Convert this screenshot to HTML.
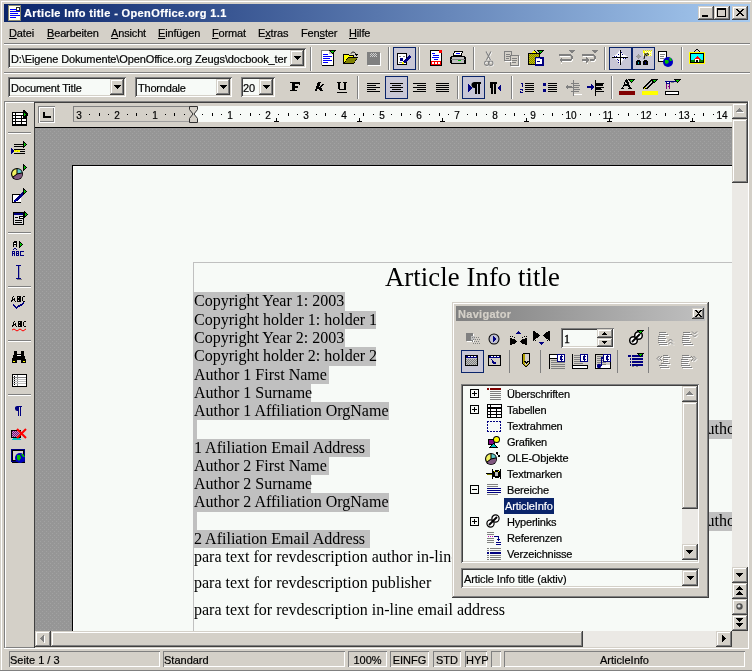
<!DOCTYPE html>
<html><head><meta charset="utf-8"><style>
html,body{margin:0;padding:0;width:752px;height:671px;overflow:hidden;background:#d4d0c8}
body>div{will-change:transform;-webkit-text-stroke:0.2px currentColor}
body>div,body>svg{position:absolute}
body>div>div{position:absolute}
u{text-decoration:underline;text-underline-offset:1px}
</style></head><body>
<div style="left:0px;top:0px;width:752px;height:671px;background:#d4d0c8;"></div>
<div style="left:1px;top:1px;width:750px;height:1px;background:#ffffff;"></div>
<div style="left:1px;top:1px;width:1px;height:669px;background:#ffffff;"></div>
<div style="left:0px;top:670px;width:752px;height:1px;background:#808080;"></div>
<div style="left:4px;top:4px;width:746px;height:18px;background:linear-gradient(90deg,#0a246a,#a6caf0);"></div>
<div style="left:24px;top:8px;font-family:'Liberation Sans',sans-serif;font-size:11px;color:#fff;font-weight:bold;white-space:nowrap;line-height:1;letter-spacing:0.37px">Article Info title - OpenOffice.org 1.1</div>
<div style="left:698px;top:6px;width:16px;height:14px;background:#d4d0c8;box-shadow:inset -1px -1px #404040,inset 1px 1px #d4d0c8,inset -2px -2px #808080,inset 2px 2px #ffffff;"></div>
<div style="left:714px;top:6px;width:16px;height:14px;background:#d4d0c8;box-shadow:inset -1px -1px #404040,inset 1px 1px #d4d0c8,inset -2px -2px #808080,inset 2px 2px #ffffff;"></div>
<div style="left:732px;top:6px;width:16px;height:14px;background:#d4d0c8;box-shadow:inset -1px -1px #404040,inset 1px 1px #d4d0c8,inset -2px -2px #808080,inset 2px 2px #ffffff;"></div>
<div style="left:702px;top:15px;width:6px;height:2px;background:#000;"></div>
<div style="left:717px;top:8px;width:9px;height:9px;box-sizing:border-box;border:1px solid #000;border-top-width:2px"></div>
<svg style="position:absolute;left:735px;top:8px;" width="10" height="10" viewBox="0 0 10 10" shape-rendering="crispEdges"><path d="M1 1L8 8M2 1L9 8M8 1L1 8M9 1L2 8" stroke="#000" stroke-width="1" shape-rendering="crispEdges"/></svg>
<div style="left:9px;top:28px;font-family:'Liberation Sans',sans-serif;font-size:11px;color:#000;font-weight:normal;white-space:nowrap;line-height:1;letter-spacing:-0.15px"><u>D</u>atei</div>
<div style="left:47px;top:28px;font-family:'Liberation Sans',sans-serif;font-size:11px;color:#000;font-weight:normal;white-space:nowrap;line-height:1;letter-spacing:-0.15px"><u>B</u>earbeiten</div>
<div style="left:111px;top:28px;font-family:'Liberation Sans',sans-serif;font-size:11px;color:#000;font-weight:normal;white-space:nowrap;line-height:1;letter-spacing:-0.15px"><u>A</u>nsicht</div>
<div style="left:158px;top:28px;font-family:'Liberation Sans',sans-serif;font-size:11px;color:#000;font-weight:normal;white-space:nowrap;line-height:1;letter-spacing:-0.15px"><u>E</u>infügen</div>
<div style="left:212px;top:28px;font-family:'Liberation Sans',sans-serif;font-size:11px;color:#000;font-weight:normal;white-space:nowrap;line-height:1;letter-spacing:-0.15px"><u>F</u>ormat</div>
<div style="left:258px;top:28px;font-family:'Liberation Sans',sans-serif;font-size:11px;color:#000;font-weight:normal;white-space:nowrap;line-height:1;letter-spacing:-0.15px">E<u>x</u>tras</div>
<div style="left:301px;top:28px;font-family:'Liberation Sans',sans-serif;font-size:11px;color:#000;font-weight:normal;white-space:nowrap;line-height:1;letter-spacing:-0.15px">Fen<u>s</u>ter</div>
<div style="left:349px;top:28px;font-family:'Liberation Sans',sans-serif;font-size:11px;color:#000;font-weight:normal;white-space:nowrap;line-height:1;letter-spacing:-0.15px"><u>H</u>ilfe</div>
<div style="left:4px;top:43px;width:746px;height:1px;background:#808080;"></div>
<div style="left:4px;top:44px;width:746px;height:1px;background:#ffffff;"></div>
<div style="left:4px;top:72px;width:746px;height:1px;background:#808080;"></div>
<div style="left:4px;top:73px;width:746px;height:1px;background:#ffffff;"></div>
<div style="left:8px;top:48px;width:298px;height:20px;background:#f7faf7;box-shadow:inset 1px 1px #808080,inset -1px -1px #ffffff,inset 2px 2px #404040,inset -2px -2px #d4d0c8;"></div>
<div style="left:11px;top:54px;font-family:'Liberation Sans',sans-serif;font-size:11px;color:#000;font-weight:normal;white-space:nowrap;line-height:1;letter-spacing:-0.12px">D:\Eigene Dokumente\OpenOffice.org Zeugs\docbook_ter</div>
<div style="left:290px;top:50px;width:14px;height:16px;background:#d4d0c8;box-shadow:inset -1px -1px #404040,inset 1px 1px #d4d0c8,inset -2px -2px #808080,inset 2px 2px #ffffff;"></div>
<svg style="position:absolute;left:294px;top:56px;" width="7" height="4" viewBox="0 0 7 4" shape-rendering="crispEdges"><path d="M0 0h7v1h-1v1h-1v1h-1v1h-1v-1h-1v-1h-1v-1h-1z" fill="#000"/></svg>
<div style="left:310px;top:47px;width:1px;height:24px;background:#808080;"></div>
<div style="left:311px;top:47px;width:1px;height:24px;background:#ffffff;"></div>
<div style="left:8px;top:77px;width:118px;height:20px;background:#f7faf7;box-shadow:inset 1px 1px #808080,inset -1px -1px #ffffff,inset 2px 2px #404040,inset -2px -2px #d4d0c8;"></div>
<div style="left:11px;top:83px;font-family:'Liberation Sans',sans-serif;font-size:11px;color:#000;font-weight:normal;white-space:nowrap;line-height:1;letter-spacing:-0.2px">Document Title</div>
<div style="left:110px;top:79px;width:14px;height:16px;background:#d4d0c8;box-shadow:inset -1px -1px #404040,inset 1px 1px #d4d0c8,inset -2px -2px #808080,inset 2px 2px #ffffff;"></div>
<svg style="position:absolute;left:114px;top:85px;" width="7" height="4" viewBox="0 0 7 4" shape-rendering="crispEdges"><path d="M0 0h7v1h-1v1h-1v1h-1v1h-1v-1h-1v-1h-1v-1h-1z" fill="#000"/></svg>
<div style="left:135px;top:77px;width:97px;height:20px;background:#f7faf7;box-shadow:inset 1px 1px #808080,inset -1px -1px #ffffff,inset 2px 2px #404040,inset -2px -2px #d4d0c8;"></div>
<div style="left:138px;top:83px;font-family:'Liberation Sans',sans-serif;font-size:11px;color:#000;font-weight:normal;white-space:nowrap;line-height:1;letter-spacing:-0.2px">Thorndale</div>
<div style="left:216px;top:79px;width:14px;height:16px;background:#d4d0c8;box-shadow:inset -1px -1px #404040,inset 1px 1px #d4d0c8,inset -2px -2px #808080,inset 2px 2px #ffffff;"></div>
<svg style="position:absolute;left:220px;top:85px;" width="7" height="4" viewBox="0 0 7 4" shape-rendering="crispEdges"><path d="M0 0h7v1h-1v1h-1v1h-1v1h-1v-1h-1v-1h-1v-1h-1z" fill="#000"/></svg>
<div style="left:241px;top:77px;width:34px;height:20px;background:#f7faf7;box-shadow:inset 1px 1px #808080,inset -1px -1px #ffffff,inset 2px 2px #404040,inset -2px -2px #d4d0c8;"></div>
<div style="left:243px;top:83px;font-family:'Liberation Sans',sans-serif;font-size:11px;color:#000;font-weight:normal;white-space:nowrap;line-height:1;">20</div>
<div style="left:259px;top:79px;width:14px;height:16px;background:#d4d0c8;box-shadow:inset -1px -1px #404040,inset 1px 1px #d4d0c8,inset -2px -2px #808080,inset 2px 2px #ffffff;"></div>
<svg style="position:absolute;left:263px;top:85px;" width="7" height="4" viewBox="0 0 7 4" shape-rendering="crispEdges"><path d="M0 0h7v1h-1v1h-1v1h-1v1h-1v-1h-1v-1h-1v-1h-1z" fill="#000"/></svg>
<div style="left:4px;top:101px;width:745px;height:1px;background:#808080;"></div>
<div style="left:4px;top:101px;width:1px;height:548px;background:#808080;"></div>
<div style="left:4px;top:648px;width:745px;height:1px;background:#ffffff;"></div>
<div style="left:748px;top:101px;width:1px;height:548px;background:#ffffff;"></div>
<div style="left:34px;top:102px;width:714px;height:1px;background:#404040;"></div>
<div style="left:34px;top:102px;width:1px;height:546px;background:#404040;"></div>
<div style="left:35px;top:103px;width:712px;height:24px;background:#d4d0c8;"></div>
<div style="left:35px;top:127px;width:697px;height:1px;background:#000;"></div>
<div style="left:38px;top:106px;width:17px;height:17px;box-sizing:border-box;background:#d4d0c8;box-shadow:inset 1px 1px #808080,inset -1px -1px #ffffff,inset 2px 2px #ffffff,inset -2px -2px #808080"></div>
<svg style="position:absolute;left:43px;top:112px;" width="8" height="6" viewBox="0 0 8 6" shape-rendering="crispEdges"><path d="M0 0h2v4h6v2h-8z" fill="#000"/></svg>
<div style="left:73px;top:106px;width:659px;height:16px;background:#f7faf7;"></div>
<div style="left:73px;top:106px;width:120px;height:16px;box-sizing:border-box;background:#d4d0c8;border:1px solid #808080;border-right:none;border-bottom-color:#a0a0a0"></div>
<div style="left:59.2px;top:110px;width:40px;text-align:center;font-family:'Liberation Sans';font-size:10px;line-height:12px;color:#000">3</div><div style="left:89px;top:114px;width:1px;height:1px;background:#000"></div><div style="left:99px;top:113px;width:1px;height:3px;background:#000"></div><div style="left:108px;top:114px;width:1px;height:1px;background:#000"></div><div style="left:97.0px;top:110px;width:40px;text-align:center;font-family:'Liberation Sans';font-size:10px;line-height:12px;color:#000">2</div><div style="left:127px;top:114px;width:1px;height:1px;background:#000"></div><div style="left:136px;top:113px;width:1px;height:3px;background:#000"></div><div style="left:146px;top:114px;width:1px;height:1px;background:#000"></div><div style="left:134.8px;top:110px;width:40px;text-align:center;font-family:'Liberation Sans';font-size:10px;line-height:12px;color:#000">1</div><div style="left:165px;top:114px;width:1px;height:1px;background:#000"></div><div style="left:174px;top:113px;width:1px;height:3px;background:#000"></div><div style="left:184px;top:114px;width:1px;height:1px;background:#000"></div><div style="left:202px;top:114px;width:1px;height:1px;background:#000"></div><div style="left:212px;top:113px;width:1px;height:3px;background:#000"></div><div style="left:221px;top:114px;width:1px;height:1px;background:#000"></div><div style="left:210.4px;top:110px;width:40px;text-align:center;font-family:'Liberation Sans';font-size:10px;line-height:12px;color:#000">1</div><div style="left:240px;top:114px;width:1px;height:1px;background:#000"></div><div style="left:250px;top:113px;width:1px;height:3px;background:#000"></div><div style="left:259px;top:114px;width:1px;height:1px;background:#000"></div><div style="left:248.2px;top:110px;width:40px;text-align:center;font-family:'Liberation Sans';font-size:10px;line-height:12px;color:#000">2</div><div style="left:278px;top:114px;width:1px;height:1px;background:#000"></div><div style="left:288px;top:113px;width:1px;height:3px;background:#000"></div><div style="left:297px;top:114px;width:1px;height:1px;background:#000"></div><div style="left:286.0px;top:110px;width:40px;text-align:center;font-family:'Liberation Sans';font-size:10px;line-height:12px;color:#000">3</div><div style="left:316px;top:114px;width:1px;height:1px;background:#000"></div><div style="left:325px;top:113px;width:1px;height:3px;background:#000"></div><div style="left:335px;top:114px;width:1px;height:1px;background:#000"></div><div style="left:323.8px;top:110px;width:40px;text-align:center;font-family:'Liberation Sans';font-size:10px;line-height:12px;color:#000">4</div><div style="left:354px;top:114px;width:1px;height:1px;background:#000"></div><div style="left:363px;top:113px;width:1px;height:3px;background:#000"></div><div style="left:373px;top:114px;width:1px;height:1px;background:#000"></div><div style="left:361.6px;top:110px;width:40px;text-align:center;font-family:'Liberation Sans';font-size:10px;line-height:12px;color:#000">5</div><div style="left:391px;top:114px;width:1px;height:1px;background:#000"></div><div style="left:401px;top:113px;width:1px;height:3px;background:#000"></div><div style="left:410px;top:114px;width:1px;height:1px;background:#000"></div><div style="left:399.4px;top:110px;width:40px;text-align:center;font-family:'Liberation Sans';font-size:10px;line-height:12px;color:#000">6</div><div style="left:429px;top:114px;width:1px;height:1px;background:#000"></div><div style="left:439px;top:113px;width:1px;height:3px;background:#000"></div><div style="left:448px;top:114px;width:1px;height:1px;background:#000"></div><div style="left:437.2px;top:110px;width:40px;text-align:center;font-family:'Liberation Sans';font-size:10px;line-height:12px;color:#000">7</div><div style="left:467px;top:114px;width:1px;height:1px;background:#000"></div><div style="left:476px;top:113px;width:1px;height:3px;background:#000"></div><div style="left:486px;top:114px;width:1px;height:1px;background:#000"></div><div style="left:475.0px;top:110px;width:40px;text-align:center;font-family:'Liberation Sans';font-size:10px;line-height:12px;color:#000">8</div><div style="left:505px;top:114px;width:1px;height:1px;background:#000"></div><div style="left:514px;top:113px;width:1px;height:3px;background:#000"></div><div style="left:524px;top:114px;width:1px;height:1px;background:#000"></div><div style="left:512.8px;top:110px;width:40px;text-align:center;font-family:'Liberation Sans';font-size:10px;line-height:12px;color:#000">9</div><div style="left:543px;top:114px;width:1px;height:1px;background:#000"></div><div style="left:552px;top:113px;width:1px;height:3px;background:#000"></div><div style="left:562px;top:114px;width:1px;height:1px;background:#000"></div><div style="left:550.6px;top:110px;width:40px;text-align:center;font-family:'Liberation Sans';font-size:10px;line-height:12px;color:#000">10</div><div style="left:580px;top:114px;width:1px;height:1px;background:#000"></div><div style="left:590px;top:113px;width:1px;height:3px;background:#000"></div><div style="left:599px;top:114px;width:1px;height:1px;background:#000"></div><div style="left:588.4px;top:110px;width:40px;text-align:center;font-family:'Liberation Sans';font-size:10px;line-height:12px;color:#000">11</div><div style="left:618px;top:114px;width:1px;height:1px;background:#000"></div><div style="left:628px;top:113px;width:1px;height:3px;background:#000"></div><div style="left:637px;top:114px;width:1px;height:1px;background:#000"></div><div style="left:626.2px;top:110px;width:40px;text-align:center;font-family:'Liberation Sans';font-size:10px;line-height:12px;color:#000">12</div><div style="left:656px;top:114px;width:1px;height:1px;background:#000"></div><div style="left:665px;top:113px;width:1px;height:3px;background:#000"></div><div style="left:675px;top:114px;width:1px;height:1px;background:#000"></div><div style="left:664.0px;top:110px;width:40px;text-align:center;font-family:'Liberation Sans';font-size:10px;line-height:12px;color:#000">13</div><div style="left:694px;top:114px;width:1px;height:1px;background:#000"></div><div style="left:703px;top:113px;width:1px;height:3px;background:#000"></div><div style="left:713px;top:114px;width:1px;height:1px;background:#000"></div><div style="left:701.8px;top:110px;width:40px;text-align:center;font-family:'Liberation Sans';font-size:10px;line-height:12px;color:#000">14</div>
<svg style="position:absolute;left:189px;top:106px;shape-rendering:auto" width="9" height="17" viewBox="0 0 9 17" shape-rendering="crispEdges"><path d="M0.5 0.5h8v3l-3.5 4.5 3.5 4.5v4h-8v-4l3.5-4.5-3.5-4.5z" fill="#d4d0c8" stroke="#303030" stroke-width="1"/></svg>
<div style="left:276px;top:118px;width:1px;height:4px;background:#000;"></div>
<div style="left:274px;top:121px;width:5px;height:1px;background:#000;"></div>
<div style="left:359px;top:118px;width:1px;height:4px;background:#000;"></div>
<div style="left:357px;top:121px;width:5px;height:1px;background:#000;"></div>
<div style="left:442px;top:118px;width:1px;height:4px;background:#000;"></div>
<div style="left:440px;top:121px;width:5px;height:1px;background:#000;"></div>
<div style="left:526px;top:118px;width:1px;height:4px;background:#000;"></div>
<div style="left:524px;top:121px;width:5px;height:1px;background:#000;"></div>
<div style="left:609px;top:118px;width:1px;height:4px;background:#000;"></div>
<div style="left:607px;top:121px;width:5px;height:1px;background:#000;"></div>
<div style="left:692px;top:118px;width:1px;height:4px;background:#000;"></div>
<div style="left:690px;top:121px;width:5px;height:1px;background:#000;"></div>
<div style="left:5px;top:102px;width:29px;height:546px;box-sizing:border-box;background:#d4d0c8;border-top:1px solid #ffffff;border-left:1px solid #ffffff;border-bottom:1px solid #808080"></div>
<div style="left:8px;top:132px;width:23px;height:1px;background:#808080;"></div>
<div style="left:8px;top:133px;width:23px;height:1px;background:#ffffff;"></div>
<div style="left:8px;top:232px;width:23px;height:1px;background:#808080;"></div>
<div style="left:8px;top:233px;width:23px;height:1px;background:#ffffff;"></div>
<div style="left:8px;top:286px;width:23px;height:1px;background:#808080;"></div>
<div style="left:8px;top:287px;width:23px;height:1px;background:#ffffff;"></div>
<div style="left:8px;top:340px;width:23px;height:1px;background:#808080;"></div>
<div style="left:8px;top:341px;width:23px;height:1px;background:#ffffff;"></div>
<div style="left:8px;top:394px;width:23px;height:1px;background:#808080;"></div>
<div style="left:8px;top:395px;width:23px;height:1px;background:#ffffff;"></div>
<svg style="position:absolute;left:35px;top:128px;" width="697" height="503" viewBox="0 0 697 503" shape-rendering="crispEdges"><defs><pattern id="dg" width="4" height="4" patternUnits="userSpaceOnUse"><rect width="4" height="4" fill="#969696"/><rect x="1" y="1" width="1" height="1" fill="#a2a2a2"/><rect x="3" y="3" width="1" height="1" fill="#a2a2a2"/></pattern></defs><rect width="697" height="503" fill="url(#dg)"/></svg>
<div style="left:72px;top:165px;width:660px;height:466px;background:#000;"></div>
<div style="left:73px;top:166px;width:659px;height:465px;background:#ffffff;"></div>
<div style="left:74px;top:167px;width:658px;height:464px;background:#f7faf7;"></div>
<div style="left:193px;top:262px;width:539px;height:1px;background:#c0c0c0;"></div>
<div style="left:193px;top:262px;width:1px;height:369px;background:#c0c0c0;"></div>
<div style="left:384.5px;top:264px;font-family:'Liberation Serif',serif;font-size:26.7px;color:#000;font-weight:normal;white-space:nowrap;line-height:1;-webkit-text-stroke:0;letter-spacing:0.09px">Article Info title</div>
<div style="left:193px;top:292px;width:152px;height:19px;background:#c0c0c0;"></div>
<div style="left:194px;top:293px;font-family:'Liberation Serif',serif;font-size:16px;color:#000;font-weight:normal;white-space:nowrap;line-height:1;-webkit-text-stroke:0;">Copyright Year 1: 2003</div>
<div style="left:193px;top:311px;width:183px;height:18px;background:#c0c0c0;"></div>
<div style="left:194px;top:312px;font-family:'Liberation Serif',serif;font-size:16px;color:#000;font-weight:normal;white-space:nowrap;line-height:1;-webkit-text-stroke:0;">Copyright holder 1: holder 1</div>
<div style="left:193px;top:329px;width:152px;height:18px;background:#c0c0c0;"></div>
<div style="left:194px;top:330px;font-family:'Liberation Serif',serif;font-size:16px;color:#000;font-weight:normal;white-space:nowrap;line-height:1;-webkit-text-stroke:0;">Copyright Year 2: 2003</div>
<div style="left:193px;top:347px;width:183px;height:19px;background:#c0c0c0;"></div>
<div style="left:194px;top:348px;font-family:'Liberation Serif',serif;font-size:16px;color:#000;font-weight:normal;white-space:nowrap;line-height:1;-webkit-text-stroke:0;">Copyright holder 2: holder 2</div>
<div style="left:193px;top:366px;width:136px;height:18px;background:#c0c0c0;"></div>
<div style="left:194px;top:367px;font-family:'Liberation Serif',serif;font-size:16px;color:#000;font-weight:normal;white-space:nowrap;line-height:1;-webkit-text-stroke:0;">Author 1 First Name</div>
<div style="left:193px;top:384px;width:118px;height:18px;background:#c0c0c0;"></div>
<div style="left:194px;top:385px;font-family:'Liberation Serif',serif;font-size:16px;color:#000;font-weight:normal;white-space:nowrap;line-height:1;-webkit-text-stroke:0;">Author 1 Surname</div>
<div style="left:193px;top:402px;width:196px;height:18px;background:#c0c0c0;"></div>
<div style="left:194px;top:403px;font-family:'Liberation Serif',serif;font-size:16px;color:#000;font-weight:normal;white-space:nowrap;line-height:1;-webkit-text-stroke:0;">Author 1 Affiliation OrgName</div>
<div style="left:193px;top:420px;width:4px;height:19px;background:#c0c0c0;"></div>
<div style="left:193px;top:439px;width:177px;height:18px;background:#c0c0c0;"></div>
<div style="left:194px;top:440px;font-family:'Liberation Serif',serif;font-size:16px;color:#000;font-weight:normal;white-space:nowrap;line-height:1;-webkit-text-stroke:0;">1 Afiliation Email Address</div>
<div style="left:193px;top:457px;width:136px;height:18px;background:#c0c0c0;"></div>
<div style="left:194px;top:458px;font-family:'Liberation Serif',serif;font-size:16px;color:#000;font-weight:normal;white-space:nowrap;line-height:1;-webkit-text-stroke:0;">Author 2 First Name</div>
<div style="left:193px;top:475px;width:118px;height:18px;background:#c0c0c0;"></div>
<div style="left:194px;top:476px;font-family:'Liberation Serif',serif;font-size:16px;color:#000;font-weight:normal;white-space:nowrap;line-height:1;-webkit-text-stroke:0;">Author 2 Surname</div>
<div style="left:193px;top:493px;width:196px;height:19px;background:#c0c0c0;"></div>
<div style="left:194px;top:494px;font-family:'Liberation Serif',serif;font-size:16px;color:#000;font-weight:normal;white-space:nowrap;line-height:1;-webkit-text-stroke:0;">Author 2 Affiliation OrgName</div>
<div style="left:193px;top:512px;width:4px;height:18px;background:#c0c0c0;"></div>
<div style="left:193px;top:530px;width:177px;height:18px;background:#c0c0c0;"></div>
<div style="left:194px;top:531px;font-family:'Liberation Serif',serif;font-size:16px;color:#000;font-weight:normal;white-space:nowrap;line-height:1;-webkit-text-stroke:0;">2 Afiliation Email Address</div>
<div style="left:709px;top:420px;width:23px;height:19px;background:#c0c0c0;"></div>
<div style="left:709px;top:420px;width:23px;height:19px;overflow:hidden"><div style="position:absolute;left:-14px;top:1px;font-family:'Liberation Serif';font-size:16px;line-height:1;white-space:nowrap;-webkit-text-stroke:0">Author</div></div>
<div style="left:709px;top:512px;width:23px;height:19px;background:#c0c0c0;"></div>
<div style="left:709px;top:512px;width:23px;height:19px;overflow:hidden"><div style="position:absolute;left:-14px;top:1px;font-family:'Liberation Serif';font-size:16px;line-height:1;white-space:nowrap;-webkit-text-stroke:0">Author</div></div>
<div style="left:194px;top:549px;font-family:'Liberation Serif',serif;font-size:16px;color:#000;font-weight:normal;white-space:nowrap;line-height:1;-webkit-text-stroke:0;">para text for revdescription author in-line</div>
<div style="left:194px;top:575px;font-family:'Liberation Serif',serif;font-size:16px;color:#000;font-weight:normal;white-space:nowrap;line-height:1;-webkit-text-stroke:0;">para text for revdescription publisher</div>
<div style="left:194px;top:602px;font-family:'Liberation Serif',serif;font-size:16px;color:#000;font-weight:normal;white-space:nowrap;line-height:1;-webkit-text-stroke:0;">para text for revdescription in-line email address</div>
<div style="left:732px;top:103px;width:16px;height:528px;background-color:#ebe9e5"></div>
<div style="left:732px;top:103px;width:16px;height:16px;background:#d4d0c8;box-shadow:inset -1px -1px #404040,inset 1px 1px #d4d0c8,inset -2px -2px #808080,inset 2px 2px #ffffff;"></div>
<div style="left:732px;top:119px;width:16px;height:64px;background:#d4d0c8;box-shadow:inset -1px -1px #404040,inset 1px 1px #d4d0c8,inset -2px -2px #808080,inset 2px 2px #ffffff;"></div>
<div style="left:732px;top:567px;width:16px;height:16px;background:#d4d0c8;box-shadow:inset -1px -1px #404040,inset 1px 1px #d4d0c8,inset -2px -2px #808080,inset 2px 2px #ffffff;"></div>
<div style="left:732px;top:583px;width:16px;height:16px;background:#d4d0c8;box-shadow:inset -1px -1px #404040,inset 1px 1px #d4d0c8,inset -2px -2px #808080,inset 2px 2px #ffffff;"></div>
<div style="left:732px;top:599px;width:16px;height:16px;background:#d4d0c8;box-shadow:inset -1px -1px #404040,inset 1px 1px #d4d0c8,inset -2px -2px #808080,inset 2px 2px #ffffff;"></div>
<div style="left:732px;top:615px;width:16px;height:16px;background:#d4d0c8;box-shadow:inset -1px -1px #404040,inset 1px 1px #d4d0c8,inset -2px -2px #808080,inset 2px 2px #ffffff;"></div>
<div style="left:35px;top:631px;width:697px;height:16px;background:#ebe9e5;"></div>
<div style="left:35px;top:631px;width:16px;height:16px;background:#d4d0c8;box-shadow:inset -1px -1px #404040,inset 1px 1px #d4d0c8,inset -2px -2px #808080,inset 2px 2px #ffffff;"></div>
<div style="left:51px;top:631px;width:532px;height:16px;background:#d4d0c8;box-shadow:inset -1px -1px #404040,inset 1px 1px #d4d0c8,inset -2px -2px #808080,inset 2px 2px #ffffff;"></div>
<div style="left:716px;top:631px;width:16px;height:16px;background:#d4d0c8;box-shadow:inset -1px -1px #404040,inset 1px 1px #d4d0c8,inset -2px -2px #808080,inset 2px 2px #ffffff;"></div>
<div style="left:732px;top:631px;width:16px;height:16px;background:#d4d0c8;"></div>
<div style="left:9px;top:651px;width:151px;height:16px;background:#d4d0c8;box-shadow:inset 1px 1px #808080,inset -1px -1px #ffffff;"></div>
<div style="left:10px;top:654px;width:149px;text-align:left;font-family:'Liberation Sans';font-size:11px;line-height:13px;white-space:nowrap">Seite 1 / 3</div>
<div style="left:163px;top:651px;width:182px;height:16px;background:#d4d0c8;box-shadow:inset 1px 1px #808080,inset -1px -1px #ffffff;"></div>
<div style="left:164px;top:654px;width:180px;text-align:left;font-family:'Liberation Sans';font-size:11px;line-height:13px;white-space:nowrap">Standard</div>
<div style="left:348px;top:651px;width:39px;height:16px;background:#d4d0c8;box-shadow:inset 1px 1px #808080,inset -1px -1px #ffffff;"></div>
<div style="left:349px;top:654px;width:37px;text-align:center;font-family:'Liberation Sans';font-size:11px;line-height:13px;white-space:nowrap">100%</div>
<div style="left:390px;top:651px;width:39px;height:16px;background:#d4d0c8;box-shadow:inset 1px 1px #808080,inset -1px -1px #ffffff;"></div>
<div style="left:391px;top:654px;width:37px;text-align:center;font-family:'Liberation Sans';font-size:11px;line-height:13px;white-space:nowrap">EINFG</div>
<div style="left:433px;top:651px;width:28px;height:16px;background:#d4d0c8;box-shadow:inset 1px 1px #808080,inset -1px -1px #ffffff;"></div>
<div style="left:434px;top:654px;width:26px;text-align:center;font-family:'Liberation Sans';font-size:11px;line-height:13px;white-space:nowrap">STD</div>
<div style="left:465px;top:651px;width:22px;height:16px;background:#d4d0c8;box-shadow:inset 1px 1px #808080,inset -1px -1px #ffffff;"></div>
<div style="left:466px;top:654px;width:20px;text-align:center;font-family:'Liberation Sans';font-size:11px;line-height:13px;white-space:nowrap">HYP</div>
<div style="left:491px;top:651px;width:10px;height:16px;background:#d4d0c8;box-shadow:inset 1px 1px #808080,inset -1px -1px #ffffff;"></div>
<div style="left:504px;top:651px;width:241px;height:16px;background:#d4d0c8;box-shadow:inset 1px 1px #808080,inset -1px -1px #ffffff;"></div>
<div style="left:505px;top:654px;width:239px;text-align:center;font-family:'Liberation Sans';font-size:11px;line-height:13px;white-space:nowrap">ArticleInfo</div>
<div style="left:452px;top:302px;width:257px;height:296px;background:#d4d0c8;box-shadow:inset -1px -1px #404040,inset 1px 1px #d4d0c8,inset -2px -2px #808080,inset 2px 2px #ffffff;"></div>
<div style="left:456px;top:306px;width:249px;height:15px;background:linear-gradient(90deg,#808080,#c0c0c0);"></div>
<div style="left:458px;top:309px;font-family:'Liberation Sans',sans-serif;font-size:11px;color:#d4d0c8;font-weight:bold;white-space:nowrap;line-height:1;letter-spacing:0.3px">Navigator</div>
<div style="left:692px;top:308px;width:12px;height:11px;background:#d4d0c8;box-shadow:inset -1px -1px #404040,inset 1px 1px #d4d0c8,inset -2px -2px #808080,inset 2px 2px #ffffff;"></div>
<div style="left:461px;top:384px;width:238px;height:179px;background:#f7faf7;box-shadow:inset 1px 1px #808080,inset -1px -1px #ffffff,inset 2px 2px #404040,inset -2px -2px #d4d0c8;"></div>
<div style="left:461px;top:568px;width:238px;height:20px;background:#f7faf7;box-shadow:inset 1px 1px #808080,inset -1px -1px #ffffff,inset 2px 2px #404040,inset -2px -2px #d4d0c8;"></div>
<div style="left:464px;top:574px;font-family:'Liberation Sans',sans-serif;font-size:11px;color:#000;font-weight:normal;white-space:nowrap;line-height:1;letter-spacing:-0.1px">Article Info title (aktiv)</div>
<div style="left:682px;top:570px;width:16px;height:16px;background:#d4d0c8;box-shadow:inset -1px -1px #404040,inset 1px 1px #d4d0c8,inset -2px -2px #808080,inset 2px 2px #ffffff;"></div>
<svg style="position:absolute;left:687px;top:576px;" width="7" height="4" viewBox="0 0 7 4" shape-rendering="crispEdges"><path d="M0 0h7v1h-1v1h-1v1h-1v1h-1v-1h-1v-1h-1v-1h-1z" fill="#000"/></svg>
<div style="left:507px;top:389px;font-family:'Liberation Sans',sans-serif;font-size:11px;color:#000;font-weight:normal;white-space:nowrap;line-height:1;letter-spacing:-0.2px">Überschriften</div>
<div style="left:507px;top:405px;font-family:'Liberation Sans',sans-serif;font-size:11px;color:#000;font-weight:normal;white-space:nowrap;line-height:1;letter-spacing:-0.2px">Tabellen</div>
<div style="left:507px;top:421px;font-family:'Liberation Sans',sans-serif;font-size:11px;color:#000;font-weight:normal;white-space:nowrap;line-height:1;letter-spacing:-0.2px">Textrahmen</div>
<div style="left:507px;top:437px;font-family:'Liberation Sans',sans-serif;font-size:11px;color:#000;font-weight:normal;white-space:nowrap;line-height:1;letter-spacing:-0.2px">Grafiken</div>
<div style="left:507px;top:453px;font-family:'Liberation Sans',sans-serif;font-size:11px;color:#000;font-weight:normal;white-space:nowrap;line-height:1;letter-spacing:-0.2px">OLE-Objekte</div>
<div style="left:507px;top:469px;font-family:'Liberation Sans',sans-serif;font-size:11px;color:#000;font-weight:normal;white-space:nowrap;line-height:1;letter-spacing:-0.2px">Textmarken</div>
<div style="left:507px;top:485px;font-family:'Liberation Sans',sans-serif;font-size:11px;color:#000;font-weight:normal;white-space:nowrap;line-height:1;letter-spacing:-0.2px">Bereiche</div>
<div style="left:504px;top:498px;width:50px;height:16px;background:#0a246a;"></div>
<div style="left:505px;top:501px;font-family:'Liberation Sans',sans-serif;font-size:11px;color:#fff;font-weight:normal;white-space:nowrap;line-height:1;letter-spacing:-0.1px">ArticleInfo</div>
<div style="left:507px;top:517px;font-family:'Liberation Sans',sans-serif;font-size:11px;color:#000;font-weight:normal;white-space:nowrap;line-height:1;letter-spacing:-0.2px">Hyperlinks</div>
<div style="left:507px;top:533px;font-family:'Liberation Sans',sans-serif;font-size:11px;color:#000;font-weight:normal;white-space:nowrap;line-height:1;letter-spacing:-0.2px">Referenzen</div>
<div style="left:507px;top:549px;font-family:'Liberation Sans',sans-serif;font-size:11px;color:#000;font-weight:normal;white-space:nowrap;line-height:1;letter-spacing:-0.2px">Verzeichnisse</div>
<div style="left:388px;top:47px;width:1px;height:23px;background:#808080;"></div>
<div style="left:389px;top:47px;width:1px;height:23px;background:#ffffff;"></div>
<div style="left:418px;top:47px;width:1px;height:23px;background:#808080;"></div>
<div style="left:419px;top:47px;width:1px;height:23px;background:#ffffff;"></div>
<div style="left:473px;top:47px;width:1px;height:23px;background:#808080;"></div>
<div style="left:474px;top:47px;width:1px;height:23px;background:#ffffff;"></div>
<div style="left:604px;top:47px;width:1px;height:23px;background:#808080;"></div>
<div style="left:605px;top:47px;width:1px;height:23px;background:#ffffff;"></div>
<div style="left:681px;top:47px;width:1px;height:23px;background:#808080;"></div>
<div style="left:682px;top:47px;width:1px;height:23px;background:#ffffff;"></div>
<div style="left:357px;top:76px;width:1px;height:23px;background:#808080;"></div>
<div style="left:358px;top:76px;width:1px;height:23px;background:#ffffff;"></div>
<div style="left:457px;top:76px;width:1px;height:23px;background:#808080;"></div>
<div style="left:458px;top:76px;width:1px;height:23px;background:#ffffff;"></div>
<div style="left:511px;top:76px;width:1px;height:23px;background:#808080;"></div>
<div style="left:512px;top:76px;width:1px;height:23px;background:#ffffff;"></div>
<div style="left:611px;top:76px;width:1px;height:23px;background:#808080;"></div>
<div style="left:612px;top:76px;width:1px;height:23px;background:#ffffff;"></div>
<div style="left:393px;top:47px;width:23px;height:23px;box-sizing:border-box;background:#c8c7d6;border:1px solid #0a246a"></div>
<div style="left:609px;top:47px;width:23px;height:23px;box-sizing:border-box;background:#c8c7d6;border:1px solid #0a246a"></div>
<div style="left:632px;top:47px;width:23px;height:23px;box-sizing:border-box;background:#c8c7d6;border:1px solid #0a246a"></div>
<div style="left:385px;top:76px;width:23px;height:23px;box-sizing:border-box;background:#c8c7d6;border:1px solid #0a246a"></div>
<div style="left:462px;top:76px;width:23px;height:23px;box-sizing:border-box;background:#c8c7d6;border:1px solid #0a246a"></div>
<svg style="position:absolute;left:321px;top:50px;" width="17" height="17" viewBox="0 0 17 17" shape-rendering="crispEdges"><rect x="0" y="0" width="12" height="15" fill="#808080"/><rect x="1" y="1" width="11" height="14" fill="#fff"/><rect x="12" y="1" width="1" height="15" fill="#000"/><rect x="1" y="15" width="12" height="1" fill="#000"/><rect x="8" y="1" width="4" height="3" fill="#c0c0c0"/><rect x="2" y="4" width="5" height="1" fill="#0000ff"/><rect x="2" y="6" width="9" height="1" fill="#0000ff"/><rect x="2" y="8" width="7" height="1" fill="#0000ff"/><rect x="2" y="10" width="9" height="1" fill="#0000ff"/><rect x="2" y="12" width="5" height="1" fill="#0000ff"/><path d="M8 0h7v1h-1v1h-1v1h-1v1h-1v-1h-1v-1h-1v-1h-1z" fill="#000" /><rect x="10" y="1" width="3" height="1" fill="#00c000"/><rect x="11" y="2" width="1" height="1" fill="#00c000"/></svg>
<svg style="position:absolute;left:343px;top:51px;" width="16" height="14" viewBox="0 0 16 14" shape-rendering="crispEdges"><path d="M0 3h5l1 1h5v2h4l-4 7h-11z" fill="#000" /><path d="M1 4h4l1 1h4v1h-5l-4 6z" fill="#ffff00" /><path d="M5 7h9l-3 5h-9z" fill="#808000" /><path d="M8 2.5c1-2 4-2 5 1" fill="none" stroke="#000" stroke-width="1" shape-rendering="auto"/><path d="M11 3h4l-2 2z" fill="#000" /></svg>
<svg style="position:absolute;left:367px;top:52px;" width="14" height="14" viewBox="0 0 14 14" shape-rendering="crispEdges"><rect x="0" y="0" width="13" height="13" fill="#808080"/><rect x="1" y="13" width="13" height="1" fill="#fff"/><rect x="13" y="1" width="1" height="13" fill="#fff"/><rect x="4" y="1" width="1" height="1" fill="#d0d0d0"/><rect x="6" y="1" width="1" height="1" fill="#d0d0d0"/><rect x="8" y="1" width="1" height="1" fill="#d0d0d0"/><rect x="3" y="2" width="1" height="1" fill="#d0d0d0"/><rect x="5" y="2" width="1" height="1" fill="#d0d0d0"/><rect x="7" y="2" width="1" height="1" fill="#d0d0d0"/><rect x="9" y="2" width="1" height="1" fill="#d0d0d0"/><rect x="4" y="3" width="1" height="1" fill="#d0d0d0"/><rect x="6" y="3" width="1" height="1" fill="#d0d0d0"/><rect x="8" y="3" width="1" height="1" fill="#d0d0d0"/><rect x="3" y="4" width="1" height="1" fill="#d0d0d0"/><rect x="5" y="4" width="1" height="1" fill="#d0d0d0"/><rect x="7" y="4" width="1" height="1" fill="#d0d0d0"/><rect x="9" y="4" width="1" height="1" fill="#d0d0d0"/></svg>
<svg style="position:absolute;left:397px;top:53px;" width="16" height="13" viewBox="0 0 16 13" shape-rendering="crispEdges"><rect x="0" y="0" width="10" height="12" fill="#000"/><rect x="1" y="1" width="8" height="10" fill="#fff"/><rect x="2" y="3" width="2" height="1" fill="#808080"/><rect x="3" y="5" width="3" height="3" fill="#000080"/><rect x="2" y="9" width="5" height="1" fill="#808080"/><rect x="6" y="3" width="2" height="1" fill="#808080"/><path d="M5 11l1-3 6-6 2 2-6 6z" fill="#000080" /><rect x="5" y="9" width="2" height="2" fill="#ffff00"/></svg>
<svg style="position:absolute;left:430px;top:50px;" width="12" height="16" viewBox="0 0 12 16" shape-rendering="crispEdges"><rect x="0" y="0" width="12" height="16" fill="#000"/><rect x="1" y="1" width="10" height="14" fill="#fff"/><rect x="9" y="0" width="3" height="3" fill="#ff0000"/><rect x="2" y="3" width="3" height="1" fill="#0000ff"/><rect x="3" y="5" width="6" height="1" fill="#0000ff"/><rect x="2" y="7" width="7" height="1" fill="#0000ff"/><rect x="4" y="9" width="4" height="1" fill="#0000ff"/><rect x="1" y="11" width="10" height="4" fill="#ff0000"/><rect x="2" y="12" width="2" height="2" fill="#fff"/><rect x="5" y="12" width="2" height="2" fill="#fff"/><rect x="8" y="12" width="2" height="2" fill="#fff"/></svg>
<svg style="position:absolute;left:450px;top:51px;" width="16" height="14" viewBox="0 0 16 14" shape-rendering="crispEdges"><path d="M4 0h9l-1 5h-9z" fill="#000" /><path d="M5 1h7l-1 3h-7z" fill="#fff" /><rect x="6" y="2" width="4" height="1" fill="#0000ff"/><path d="M1 5h14l1 2v5l-1 1h-14l-1-1v-5z" fill="#000" /><rect x="2" y="6" width="12" height="2" fill="#c0c0c0"/><rect x="2" y="9" width="12" height="3" fill="#c0c0c0"/><rect x="8" y="9" width="3" height="1" fill="#00c000"/><rect x="1" y="8" width="14" height="1" fill="#808080"/></svg>
<svg style="position:absolute;left:484px;top:51px;" width="10" height="16" viewBox="0 0 10 16" shape-rendering="crispEdges"><g shape-rendering="auto"><path d="M2 0.5L6.5 9M7 0.5L2.5 9" stroke="#fff" stroke-width="1.2" transform="translate(0.6 0.6)"/><path d="M2 0.5L6.5 9M7 0.5L2.5 9" stroke="#808080" stroke-width="1.2"/><circle cx="2.8" cy="12.2" r="2.2" fill="none" stroke="#fff" stroke-width="1.1" transform="translate(0.6 0.6)"/><circle cx="6.8" cy="12.2" r="2.2" fill="none" stroke="#fff" stroke-width="1.1" transform="translate(0.6 0.6)"/><circle cx="2.8" cy="12.2" r="2.2" fill="none" stroke="#808080" stroke-width="1.1"/><circle cx="6.8" cy="12.2" r="2.2" fill="none" stroke="#808080" stroke-width="1.1"/></g></svg>
<svg style="position:absolute;left:504px;top:51px;" width="16" height="16" viewBox="0 0 16 16" shape-rendering="crispEdges"><rect x="0" y="0" width="8" height="10" fill="#808080"/><rect x="1" y="1" width="6" height="8" fill="#d4d0c8"/><rect x="2" y="3" width="4" height="1" fill="#808080"/><rect x="2" y="5" width="4" height="1" fill="#808080"/><rect x="2" y="7" width="3" height="1" fill="#808080"/><rect x="6" y="4" width="9" height="11" fill="#808080"/><rect x="7" y="5" width="7" height="9" fill="#d4d0c8"/><rect x="8" y="7" width="5" height="1" fill="#808080"/><rect x="8" y="9" width="5" height="1" fill="#808080"/><rect x="8" y="11" width="4" height="1" fill="#808080"/><rect x="1" y="10" width="7" height="1" fill="#fff"/><rect x="7" y="15" width="9" height="1" fill="#fff"/><rect x="15" y="5" width="1" height="10" fill="#fff"/></svg>
<svg style="position:absolute;left:528px;top:50px;" width="16" height="16" viewBox="0 0 16 16" shape-rendering="crispEdges"><rect x="0" y="3" width="12" height="12" fill="#000"/><rect x="1" y="4" width="10" height="10" fill="#808000"/><rect x="1" y="4" width="1" height="1" fill="#c8c800"/><rect x="3" y="4" width="1" height="1" fill="#c8c800"/><rect x="5" y="4" width="1" height="1" fill="#c8c800"/><rect x="7" y="4" width="1" height="1" fill="#c8c800"/><rect x="9" y="4" width="1" height="1" fill="#c8c800"/><rect x="2" y="5" width="1" height="1" fill="#c8c800"/><rect x="4" y="5" width="1" height="1" fill="#c8c800"/><rect x="6" y="5" width="1" height="1" fill="#c8c800"/><rect x="8" y="5" width="1" height="1" fill="#c8c800"/><rect x="10" y="5" width="1" height="1" fill="#c8c800"/><rect x="1" y="6" width="1" height="1" fill="#c8c800"/><rect x="3" y="6" width="1" height="1" fill="#c8c800"/><rect x="5" y="6" width="1" height="1" fill="#c8c800"/><rect x="7" y="6" width="1" height="1" fill="#c8c800"/><rect x="9" y="6" width="1" height="1" fill="#c8c800"/><rect x="2" y="7" width="1" height="1" fill="#c8c800"/><rect x="4" y="7" width="1" height="1" fill="#c8c800"/><rect x="6" y="7" width="1" height="1" fill="#c8c800"/><rect x="8" y="7" width="1" height="1" fill="#c8c800"/><rect x="10" y="7" width="1" height="1" fill="#c8c800"/><rect x="1" y="8" width="1" height="1" fill="#c8c800"/><rect x="3" y="8" width="1" height="1" fill="#c8c800"/><rect x="5" y="8" width="1" height="1" fill="#c8c800"/><rect x="7" y="8" width="1" height="1" fill="#c8c800"/><rect x="9" y="8" width="1" height="1" fill="#c8c800"/><rect x="2" y="9" width="1" height="1" fill="#c8c800"/><rect x="4" y="9" width="1" height="1" fill="#c8c800"/><rect x="6" y="9" width="1" height="1" fill="#c8c800"/><rect x="8" y="9" width="1" height="1" fill="#c8c800"/><rect x="10" y="9" width="1" height="1" fill="#c8c800"/><rect x="1" y="10" width="1" height="1" fill="#c8c800"/><rect x="3" y="10" width="1" height="1" fill="#c8c800"/><rect x="5" y="10" width="1" height="1" fill="#c8c800"/><rect x="7" y="10" width="1" height="1" fill="#c8c800"/><rect x="9" y="10" width="1" height="1" fill="#c8c800"/><rect x="2" y="11" width="1" height="1" fill="#c8c800"/><rect x="4" y="11" width="1" height="1" fill="#c8c800"/><rect x="6" y="11" width="1" height="1" fill="#c8c800"/><rect x="8" y="11" width="1" height="1" fill="#c8c800"/><rect x="10" y="11" width="1" height="1" fill="#c8c800"/><rect x="1" y="12" width="1" height="1" fill="#c8c800"/><rect x="3" y="12" width="1" height="1" fill="#c8c800"/><rect x="5" y="12" width="1" height="1" fill="#c8c800"/><rect x="7" y="12" width="1" height="1" fill="#c8c800"/><rect x="9" y="12" width="1" height="1" fill="#c8c800"/><rect x="2" y="13" width="1" height="1" fill="#c8c800"/><rect x="4" y="13" width="1" height="1" fill="#c8c800"/><rect x="6" y="13" width="1" height="1" fill="#c8c800"/><rect x="8" y="13" width="1" height="1" fill="#c8c800"/><rect x="10" y="13" width="1" height="1" fill="#c8c800"/><path d="M3 3l3-3 3 3z" fill="#000" /><rect x="5" y="1" width="2" height="1" fill="#ffff00"/><rect x="4" y="2" width="4" height="1" fill="#ffff00"/><rect x="7" y="7" width="9" height="9" fill="#000080"/><rect x="8" y="9" width="6" height="5" fill="#fff"/><rect x="9" y="11" width="3" height="1" fill="#000080"/><rect x="8" y="8" width="4" height="1" fill="#c0c0ff"/><path d="M9 0h7v1h-1v1h-1v1h-1v1h-1v-1h-1v-1h-1v-1h-1z" fill="#000" /><rect x="11" y="1" width="3" height="1" fill="#00c000"/><rect x="12" y="2" width="1" height="1" fill="#00c000"/></svg>
<svg style="position:absolute;left:559px;top:50px;" width="17" height="14" viewBox="0 0 17 14" shape-rendering="crispEdges"><rect x="0" y="4" width="11" height="2" fill="#808080"/><path d="M11 4h1v1h1v1h1v3h-1v1h-1v1h-1v-2h1v-3h-1z" fill="#808080" /><path d="M9 0h7l-3.5 3.5z" fill="#808080" /><rect x="1" y="6" width="10" height="1" fill="#fff"/><rect x="13" y="9" width="1" height="2" fill="#fff"/><rect x="12" y="11" width="1" height="1" fill="#fff"/><rect x="3" y="9" width="8" height="2" fill="#808080"/><path d="M0 10l3-3v6z" fill="#808080" /><rect x="3" y="11" width="9" height="1" fill="#fff"/><rect x="2" y="13" width="1" height="1" fill="#fff"/></svg>
<svg style="position:absolute;left:582px;top:50px;" width="17" height="14" viewBox="0 0 17 14" shape-rendering="crispEdges"><rect x="0" y="4" width="11" height="2" fill="#808080"/><path d="M11 4h1v1h1v1h1v3h-1v1h-1v1h-1v-2h1v-3h-1z" fill="#808080" /><path d="M9 0h7l-3.5 3.5z" fill="#808080" /><rect x="1" y="6" width="10" height="1" fill="#fff"/><rect x="13" y="9" width="1" height="2" fill="#fff"/><rect x="12" y="11" width="1" height="1" fill="#fff"/><rect x="8" y="9" width="3" height="2" fill="#808080"/><rect x="0" y="9" width="4" height="2" fill="#808080"/><path d="M4 7l3 3-3 3z" fill="#808080" /><rect x="1" y="11" width="3" height="1" fill="#fff"/><rect x="9" y="11" width="3" height="1" fill="#fff"/><rect x="5" y="13" width="1" height="1" fill="#fff"/></svg>
<svg style="position:absolute;left:612px;top:50px;" width="16" height="16" viewBox="0 0 16 16" shape-rendering="crispEdges"><path d="M8 0L11 4 16 7 11 10 8 15 5 10 0 7 5 4z" fill="#fff" shape-rendering="auto"/><rect x="9" y="2" width="1" height="1" fill="#000080"/><rect x="10" y="4" width="1" height="1" fill="#000080"/><rect x="11" y="8" width="1" height="1" fill="#000080"/><rect x="13" y="8" width="1" height="1" fill="#000080"/><rect x="6" y="4" width="1" height="1" fill="#000080"/><rect x="4" y="6" width="1" height="1" fill="#000080"/><rect x="2" y="6" width="1" height="1" fill="#000080"/><rect x="6" y="10" width="1" height="1" fill="#000080"/><rect x="6" y="12" width="1" height="1" fill="#000080"/><rect x="5" y="9" width="1" height="1" fill="#000080"/><rect x="8" y="0" width="1" height="15" fill="#000"/><rect x="0" y="7" width="16" height="1" fill="#000"/></svg>
<svg style="position:absolute;left:636px;top:50px;" width="16" height="16" viewBox="0 0 16 16" shape-rendering="crispEdges"><rect x="2" y="4" width="1" height="5" fill="#909090"/><rect x="0" y="6" width="5" height="1" fill="#909090"/><rect x="1" y="5" width="3" height="3" fill="#a0a0a0"/><path d="M1 10h3v1h1v4h-5v-4h1z" fill="#000" /><rect x="2" y="12" width="1" height="2" fill="#00a0a0"/><path d="M8 10h3v1h1v4h-5v-4h1z" fill="#000" /><rect x="9" y="12" width="1" height="2" fill="#000080"/><rect x="7" y="0" width="1" height="1" fill="#e0e000"/><rect x="9" y="0" width="1" height="1" fill="#e0e000"/><rect x="11" y="0" width="1" height="1" fill="#e0e000"/><rect x="13" y="0" width="1" height="1" fill="#e0e000"/><rect x="15" y="0" width="1" height="1" fill="#e0e000"/><rect x="8" y="2" width="1" height="1" fill="#e0e000"/><rect x="10" y="2" width="1" height="1" fill="#e0e000"/><rect x="12" y="2" width="1" height="1" fill="#e0e000"/><rect x="14" y="2" width="1" height="1" fill="#e0e000"/><rect x="7" y="4" width="1" height="1" fill="#e0e000"/><rect x="9" y="4" width="1" height="1" fill="#e0e000"/><rect x="11" y="4" width="1" height="1" fill="#e0e000"/><rect x="13" y="4" width="1" height="1" fill="#e0e000"/><rect x="15" y="4" width="1" height="1" fill="#e0e000"/><rect x="7" y="1" width="9" height="5" fill="#ffffc0"/><rect x="8" y="1" width="1" height="1" fill="#ffff00"/><rect x="10" y="1" width="1" height="1" fill="#ffff00"/><rect x="12" y="1" width="1" height="1" fill="#ffff00"/><rect x="14" y="1" width="1" height="1" fill="#ffff00"/><rect x="8" y="3" width="1" height="1" fill="#ffff00"/><rect x="10" y="3" width="1" height="1" fill="#ffff00"/><rect x="12" y="3" width="1" height="1" fill="#ffff00"/><rect x="14" y="3" width="1" height="1" fill="#ffff00"/><rect x="8" y="5" width="1" height="1" fill="#ffff00"/><rect x="10" y="5" width="1" height="1" fill="#ffff00"/><rect x="12" y="5" width="1" height="1" fill="#ffff00"/><rect x="14" y="5" width="1" height="1" fill="#ffff00"/><path d="M7 1l2 2 0 2-1 4M9 5l3-2M10 6l3-2" fill="none" stroke="#000" stroke-width="1" shape-rendering="auto"/><rect x="7" y="1" width="2" height="2" fill="#ffff00"/></svg>
<svg style="position:absolute;left:658px;top:51px;" width="16" height="16" viewBox="0 0 16 16" shape-rendering="crispEdges"><rect x="0" y="0" width="9" height="11" fill="#000"/><rect x="1" y="1" width="7" height="9" fill="#fff"/><rect x="2" y="3" width="5" height="1" fill="#808080"/><rect x="2" y="5" width="4" height="1" fill="#808080"/><rect x="2" y="7" width="4" height="1" fill="#808080"/><circle cx="10" cy="11" r="5" fill="#0000c0" shape-rendering="auto"/><path d="M7 9h3l1 2-2 2-2-1zM11 7h2l1 3h-2z" fill="#00c000" shape-rendering="auto"/></svg>
<svg style="position:absolute;left:689px;top:49px;" width="16" height="16" viewBox="0 0 16 16" shape-rendering="crispEdges"><path d="M5 3l3-3 3 3" fill="none" stroke="#000" stroke-width="1" /><rect x="0" y="3" width="16" height="12" fill="#ffff00"/><rect x="1" y="4" width="14" height="10" fill="#000"/><rect x="2" y="5" width="12" height="8" fill="#00ffff"/><rect x="2" y="11" width="12" height="2" fill="#008000"/><path d="M4 11l4-4 4 4z" fill="#ff0000" /><rect x="6" y="10" width="4" height="3" fill="#fff"/><rect x="7" y="11" width="2" height="2" fill="#000"/></svg>
<svg style="position:absolute;left:290px;top:82px;" width="11" height="10" viewBox="0 0 11 10" shape-rendering="crispEdges"><path d="M0 0h10v3h-1v-1h-4v2h3v2h-3v2h2v1h-7v-1h2v-7h-2z" fill="#000" /></svg>
<svg style="position:absolute;left:315px;top:82px;" width="10" height="10" viewBox="0 0 10 10" shape-rendering="crispEdges"><path d="M3 0h3l-2 5 4-3h2l-4 3 2 4h-3l-2-3-1 3h-2z" fill="#000" /></svg>
<svg style="position:absolute;left:337px;top:82px;" width="10" height="11" viewBox="0 0 10 11" shape-rendering="crispEdges"><path d="M0 0h4v1h-1v6h4v-6h-1v-1h4v1h-1v6l-1 1h-6l-1-1v-6h-1z" fill="#000" /><rect x="0" y="10" width="10" height="1" fill="#000"/></svg>
<svg style="position:absolute;left:367px;top:83px;" width="13" height="10" viewBox="0 0 13 10" shape-rendering="crispEdges"><rect x="0" y="0" width="13" height="1" fill="#000"/><rect x="0" y="2" width="9" height="1" fill="#000"/><rect x="0" y="4" width="13" height="1" fill="#000"/><rect x="0" y="6" width="9" height="1" fill="#000"/><rect x="0" y="8" width="13" height="1" fill="#000"/></svg>
<svg style="position:absolute;left:390px;top:83px;" width="13" height="10" viewBox="0 0 13 10" shape-rendering="crispEdges"><rect x="0" y="0" width="13" height="1" fill="#000"/><rect x="2" y="2" width="9" height="1" fill="#000"/><rect x="0" y="4" width="13" height="1" fill="#000"/><rect x="2" y="6" width="9" height="1" fill="#000"/><rect x="0" y="8" width="13" height="1" fill="#000"/></svg>
<svg style="position:absolute;left:413px;top:83px;" width="13" height="10" viewBox="0 0 13 10" shape-rendering="crispEdges"><rect x="0" y="0" width="13" height="1" fill="#000"/><rect x="4" y="2" width="9" height="1" fill="#000"/><rect x="0" y="4" width="13" height="1" fill="#000"/><rect x="4" y="6" width="9" height="1" fill="#000"/><rect x="0" y="8" width="13" height="1" fill="#000"/></svg>
<svg style="position:absolute;left:436px;top:83px;" width="13" height="10" viewBox="0 0 13 10" shape-rendering="crispEdges"><rect x="0" y="0" width="13" height="1" fill="#000"/><rect x="0" y="2" width="13" height="1" fill="#000"/><rect x="0" y="4" width="13" height="1" fill="#000"/><rect x="0" y="6" width="13" height="1" fill="#000"/><rect x="0" y="8" width="13" height="1" fill="#000"/></svg>
<svg style="position:absolute;left:468px;top:82px;" width="14" height="12" viewBox="0 0 14 12" shape-rendering="crispEdges"><path d="M0 2l4 4-4 4z" fill="#000080" /><path d="M6 0h7v2h-1v10h-2v-10h-1v10h-2v-6a3 3 0 0 1 -1-6z" fill="#000" shape-rendering="auto"/></svg>
<svg style="position:absolute;left:490px;top:82px;" width="12" height="12" viewBox="0 0 12 12" shape-rendering="crispEdges"><path d="M0 0h7v2h-1v10h-2v-10h-1v10h-2v-6a3 3 0 0 1 -1-6z" fill="#000" shape-rendering="auto"/><path d="M11 2l-4 4 4 4z" fill="#000080" /></svg>
<svg style="position:absolute;left:520px;top:82px;" width="14" height="11" viewBox="0 0 14 11" shape-rendering="crispEdges"><path d="M1 1h2v4h-1v-3h-1z" fill="#000080" /><path d="M0 7h3v2h-2v1h2v1h-3v-2h2v-1h-2z" fill="#000080" /><rect x="5" y="1" width="9" height="1" fill="#000"/><rect x="5" y="3" width="9" height="1" fill="#000"/><rect x="5" y="5" width="9" height="1" fill="#000"/><rect x="5" y="7" width="9" height="1" fill="#000"/><rect x="5" y="9" width="9" height="1" fill="#000"/></svg>
<svg style="position:absolute;left:543px;top:82px;" width="14" height="11" viewBox="0 0 14 11" shape-rendering="crispEdges"><rect x="0" y="1" width="3" height="3" fill="#000080"/><rect x="0" y="7" width="3" height="3" fill="#000080"/><rect x="5" y="1" width="9" height="1" fill="#000"/><rect x="5" y="3" width="9" height="1" fill="#000"/><rect x="5" y="5" width="9" height="1" fill="#000"/><rect x="5" y="7" width="9" height="1" fill="#000"/><rect x="5" y="9" width="9" height="1" fill="#000"/></svg>
<svg style="position:absolute;left:565px;top:80px;" width="18" height="16" viewBox="0 0 18 16" shape-rendering="crispEdges"><rect x="8" y="0" width="1" height="16" fill="#808080"/><path d="M0 7l3-3v2h4v2h-4v2z" fill="#808080" /><rect x="6" y="3" width="8" height="1" fill="#808080"/><rect x="9" y="5" width="6" height="1" fill="#808080"/><rect x="6" y="7" width="8" height="1" fill="#808080"/><rect x="9" y="9" width="6" height="1" fill="#808080"/><rect x="6" y="11" width="8" height="1" fill="#808080"/><rect x="9" y="14" width="8" height="1" fill="#fff"/></svg>
<svg style="position:absolute;left:587px;top:80px;" width="18" height="16" viewBox="0 0 18 16" shape-rendering="crispEdges"><rect x="8" y="0" width="1" height="16" fill="#000"/><path d="M7 7l-3-3v2h-4v2h4v2z" fill="#000080" /><rect x="9" y="3" width="8" height="1" fill="#000"/><rect x="9" y="5" width="6" height="1" fill="#000"/><rect x="9" y="7" width="8" height="1" fill="#000"/><rect x="9" y="9" width="6" height="1" fill="#000"/><rect x="9" y="11" width="8" height="1" fill="#000"/><rect x="9" y="4" width="7" height="2" fill="#000"/><rect x="9" y="8" width="5" height="2" fill="#000"/></svg>
<svg style="position:absolute;left:619px;top:79px;" width="16" height="16" viewBox="0 0 16 16" shape-rendering="crispEdges"><path d="M2 10h3v-1h-1l1-2h4l1 2h-1v1h4v-1h-1l-4-9h-1l-4 9h-1zM6 5l1-3 1 3z" fill="#000" /><rect x="0" y="12" width="16" height="4" fill="#800000"/><path d="M9 0h7v1h-1v1h-1v1h-1v1h-1v-1h-1v-1h-1v-1h-1z" fill="#000" /><rect x="11" y="1" width="3" height="1" fill="#00c000"/><rect x="12" y="2" width="1" height="1" fill="#00c000"/></svg>
<svg style="position:absolute;left:642px;top:79px;" width="16" height="16" viewBox="0 0 16 16" shape-rendering="crispEdges"><path d="M1 10l1-3 7-6 3 3-7 6z" fill="#000" /><path d="M3 8l6-6 1 1-6 6z" fill="#c0c0c0" /><path d="M2 10l1-2 1 1z" fill="#ffff00" /><rect x="0" y="12" width="16" height="4" fill="#ffff00"/><path d="M9 0h7v1h-1v1h-1v1h-1v1h-1v-1h-1v-1h-1v-1h-1z" fill="#000" /><rect x="11" y="1" width="3" height="1" fill="#00c000"/><rect x="12" y="2" width="1" height="1" fill="#00c000"/></svg>
<svg style="position:absolute;left:665px;top:79px;" width="16" height="16" viewBox="0 0 16 16" shape-rendering="crispEdges"><rect x="0" y="2" width="13" height="1" fill="#000080"/><rect x="1" y="3" width="4" height="2" fill="#000080"/><rect x="2" y="3" width="2" height="1" fill="#fff"/><rect x="1" y="5" width="1" height="5" fill="#800080"/><rect x="4" y="5" width="1" height="5" fill="#800080"/><rect x="3" y="7" width="1" height="1" fill="#800080"/><rect x="6" y="3" width="3" height="1" fill="#808080"/><rect x="0" y="12" width="14" height="4" fill="#000"/><rect x="1" y="13" width="12" height="2" fill="#fff"/><path d="M9 0h7v1h-1v1h-1v1h-1v1h-1v-1h-1v-1h-1v-1h-1z" fill="#000" /><rect x="11" y="1" width="3" height="1" fill="#00c000"/><rect x="12" y="2" width="1" height="1" fill="#00c000"/></svg>
<svg style="position:absolute;left:12px;top:110px;" width="17" height="17" viewBox="0 0 17 17" shape-rendering="crispEdges"><rect x="0" y="2" width="15" height="14" fill="#000"/><rect x="1" y="3" width="2" height="2" fill="#fff"/><rect x="4" y="3" width="7" height="2" fill="#fff"/><rect x="1" y="6" width="2" height="2" fill="#fff"/><rect x="4" y="6" width="5" height="2" fill="#fff"/><rect x="10" y="6" width="4" height="2" fill="#fff"/><rect x="1" y="9" width="2" height="2" fill="#fff"/><rect x="4" y="9" width="5" height="2" fill="#fff"/><rect x="10" y="9" width="4" height="2" fill="#fff"/><rect x="1" y="12" width="2" height="2" fill="#fff"/><rect x="4" y="12" width="5" height="2" fill="#fff"/><rect x="10" y="12" width="4" height="2" fill="#fff"/><rect x="11" y="3" width="4" height="3" fill="#d4d0c8"/><path d="M11 0h1l4 4v1l-4 4h-1z" fill="#000" /><path d="M12 2l2 2.5-2 2.5z" fill="#00c000" /></svg>
<svg style="position:absolute;left:11px;top:141px;" width="17" height="15" viewBox="0 0 17 15" shape-rendering="crispEdges"><path d="M0 7l3 3-3 3z" fill="#000080" /><rect x="3" y="3" width="9" height="1" fill="#000"/><rect x="3" y="5" width="9" height="1" fill="#000"/><rect x="3" y="8" width="11" height="1" fill="#000"/><rect x="3" y="10" width="11" height="1" fill="#000"/><rect x="3" y="12" width="11" height="1" fill="#000"/><rect x="3" y="9" width="6" height="2" fill="#ffff00"/><rect x="4" y="9" width="1" height="1" fill="#c0c000"/><rect x="6" y="10" width="1" height="1" fill="#c0c000"/><path d="M12 0v7h1v-1h1v-1h1v-1h1v-1h-1v-1h-1v-1h-1v-1z" fill="#000" /><rect x="13" y="2" width="1" height="3" fill="#00c000"/><rect x="14" y="3" width="1" height="1" fill="#00c000"/></svg>
<svg style="position:absolute;left:11px;top:164px;" width="17" height="18" viewBox="0 0 17 18" shape-rendering="crispEdges"><g shape-rendering="auto" transform="translate(0 2)"><circle cx="6" cy="8" r="6" fill="#000"/><path d="M6 8V3a5 5 0 0 0 -4 8z" fill="#f0f060"/><path d="M6 8V3a5 5 0 0 1 5 4z" fill="#60c8c8"/><path d="M6 8L2 11a5 5 0 0 0 9-4z" fill="#805880"/><path d="M6 2.5V8L1.8 11.2M6 8L11.3 6.8" stroke="#000" stroke-width="1" fill="none"/></g><path d="M12 0v7h1v-1h1v-1h1v-1h1v-1h-1v-1h-1v-1h-1v-1z" fill="#000" /><rect x="13" y="2" width="1" height="3" fill="#00c000"/><rect x="14" y="3" width="1" height="1" fill="#00c000"/></svg>
<svg style="position:absolute;left:11px;top:188px;" width="17" height="16" viewBox="0 0 17 16" shape-rendering="crispEdges"><rect x="1" y="6" width="9" height="9" fill="#000"/><rect x="2" y="7" width="8" height="7" fill="#fff"/><path d="M3 14l1-3 7-7 2 2-7 7z" fill="#000080" /><rect x="4" y="12" width="1" height="1" fill="#0000ff"/><path d="M12 0v7h1v-1h1v-1h1v-1h1v-1h-1v-1h-1v-1h-1v-1z" fill="#000" /><rect x="13" y="2" width="1" height="3" fill="#00c000"/><rect x="14" y="3" width="1" height="1" fill="#00c000"/></svg>
<svg style="position:absolute;left:13px;top:211px;" width="15" height="15" viewBox="0 0 15 15" shape-rendering="crispEdges"><rect x="0" y="1" width="11" height="13" fill="#000"/><rect x="1" y="2" width="9" height="11" fill="#e0e0e0"/><rect x="1" y="2" width="9" height="2" fill="#000080"/><rect x="2" y="6" width="3" height="1" fill="#000"/><rect x="6" y="5" width="4" height="3" fill="#000"/><rect x="7" y="6" width="3" height="1" fill="#fff"/><rect x="2" y="9" width="7" height="1" fill="#000"/><rect x="2" y="11" width="7" height="1" fill="#000"/><path d="M11 0v7h1v-1h1v-1h1v-1h1v-1h-1v-1h-1v-1h-1v-1z" fill="#000" /><rect x="12" y="2" width="1" height="3" fill="#00c000"/><rect x="13" y="3" width="1" height="1" fill="#00c000"/></svg>
<svg style="position:absolute;left:12px;top:241px;" width="16" height="16" viewBox="0 0 16 16" shape-rendering="crispEdges"><path d="M2 0h2l1 1v5h-1v-2h-2v2h-1v-5z" fill="#000" /><rect x="2" y="2" width="2" height="1" fill="#fff"/><path d="M3 7l-2 2M3 7l2 2" fill="none" stroke="#000080" stroke-width="1" /><path d="M0 10h3v5h-3zM4 10h3v5h-3zM8 10h4v5h-4z" fill="#000080" /><rect x="1" y="11" width="1" height="1" fill="#d4d0c8"/><rect x="1" y="13" width="1" height="2" fill="#d4d0c8"/><rect x="5" y="11" width="1" height="1" fill="#d4d0c8"/><rect x="5" y="13" width="1" height="1" fill="#d4d0c8"/><rect x="9" y="11" width="3" height="3" fill="#d4d0c8"/><path d="M7 0v7h1v-1h1v-1h1v-1h1v-1h-1v-1h-1v-1h-1v-1z" fill="#000" /><rect x="8" y="2" width="1" height="3" fill="#00c000"/><rect x="9" y="3" width="1" height="1" fill="#00c000"/></svg>
<svg style="position:absolute;left:15px;top:265px;" width="8" height="16" viewBox="0 0 8 16" shape-rendering="crispEdges"><rect x="1" y="0" width="5" height="1" fill="#000080"/><rect x="3" y="1" width="1" height="12" fill="#000080"/><rect x="1" y="13" width="5" height="1" fill="#000080"/><rect x="4" y="1" width="1" height="12" fill="#a0a0b0"/><rect x="2" y="14" width="5" height="1" fill="#808080"/></svg>
<svg style="position:absolute;left:11px;top:296px;" width="15" height="14" viewBox="0 0 15 14" shape-rendering="crispEdges"><path d="M0 6l2-6h1l2 6h-1l-1-2h-1l-1 2zM2 3h1l-0.5-2z" fill="#000" /><path d="M6 0h3l1 1v1l-1 1 1 1v1l-1 1h-3z" fill="#000" /><rect x="7" y="1" width="1" height="1" fill="#d4d0c8"/><rect x="7" y="4" width="1" height="1" fill="#d4d0c8"/><path d="M11 1l1-1h2v1h-2v4h2v1h-2l-1-1z" fill="#000" /><path d="M2 8l3 3 8-5v2l-8 5-4-4z" fill="#000080" /></svg>
<svg style="position:absolute;left:12px;top:321px;" width="15" height="12" viewBox="0 0 15 12" shape-rendering="crispEdges"><path d="M0 6l2-6h1l2 6h-1l-1-2h-1l-1 2zM2 3h1l-0.5-2z" fill="#000" /><path d="M6 0h3l1 1v1l-1 1 1 1v1l-1 1h-3z" fill="#000" /><rect x="7" y="1" width="1" height="1" fill="#d4d0c8"/><rect x="7" y="4" width="1" height="1" fill="#d4d0c8"/><path d="M11 1l1-1h2v1h-2v4h2v1h-2l-1-1z" fill="#000" /><path d="M0 9l2-1 3 2 3-2 3 2 3-2" fill="none" stroke="#ff0000" stroke-width="1" shape-rendering="auto"/></svg>
<svg style="position:absolute;left:12px;top:351px;" width="15" height="12" viewBox="0 0 15 12" shape-rendering="crispEdges"><path d="M2 0h3v3h4v-3h3v3l2 6v3h-5v-3h-4v3h-5v-3l2-6z" fill="#000" /><rect x="1" y="10" width="2" height="1" fill="#ffff00"/><rect x="11" y="10" width="2" height="1" fill="#ffff00"/><rect x="5" y="4" width="4" height="1" fill="#fff"/></svg>
<svg style="position:absolute;left:12px;top:374px;" width="15" height="13" viewBox="0 0 15 13" shape-rendering="crispEdges"><rect x="0" y="0" width="15" height="13" fill="#000"/><rect x="1" y="1" width="13" height="11" fill="#fff"/><rect x="1" y="3" width="13" height="1" fill="#808080"/><rect x="5" y="1" width="1" height="11" fill="#808080"/><rect x="1" y="5" width="13" height="1" fill="#c0c0c0"/><rect x="1" y="7" width="13" height="1" fill="#c0c0c0"/><rect x="1" y="9" width="13" height="1" fill="#c0c0c0"/><rect x="2" y="2" width="1" height="1" fill="#000"/><rect x="2" y="4" width="1" height="1" fill="#000"/><rect x="2" y="6" width="1" height="1" fill="#000"/><rect x="2" y="8" width="1" height="1" fill="#000"/><rect x="2" y="10" width="1" height="1" fill="#000"/></svg>
<svg style="position:absolute;left:15px;top:406px;" width="8" height="11" viewBox="0 0 8 11" shape-rendering="crispEdges"><path d="M2 0h5v1h-1v9h-1v-9h-1v9h-1v-5a2.5 2.5 0 0 1 -1-5z" fill="#000080" shape-rendering="auto"/></svg>
<svg style="position:absolute;left:11px;top:428px;" width="16" height="13" viewBox="0 0 16 13" shape-rendering="crispEdges"><rect x="0" y="2" width="10" height="8" fill="#000"/><rect x="1" y="3" width="8" height="6" fill="#800080"/><rect x="2" y="3" width="1" height="1" fill="#c0a0c0"/><rect x="4" y="3" width="1" height="1" fill="#c0a0c0"/><rect x="6" y="3" width="1" height="1" fill="#c0a0c0"/><rect x="8" y="3" width="1" height="1" fill="#c0a0c0"/><rect x="1" y="4" width="1" height="1" fill="#c0a0c0"/><rect x="3" y="4" width="1" height="1" fill="#c0a0c0"/><rect x="5" y="4" width="1" height="1" fill="#c0a0c0"/><rect x="7" y="4" width="1" height="1" fill="#c0a0c0"/><rect x="2" y="5" width="1" height="1" fill="#c0a0c0"/><rect x="4" y="5" width="1" height="1" fill="#c0a0c0"/><rect x="6" y="5" width="1" height="1" fill="#c0a0c0"/><rect x="8" y="5" width="1" height="1" fill="#c0a0c0"/><rect x="1" y="6" width="1" height="1" fill="#c0a0c0"/><rect x="3" y="6" width="1" height="1" fill="#c0a0c0"/><rect x="5" y="6" width="1" height="1" fill="#c0a0c0"/><rect x="7" y="6" width="1" height="1" fill="#c0a0c0"/><rect x="2" y="7" width="1" height="1" fill="#c0a0c0"/><rect x="4" y="7" width="1" height="1" fill="#c0a0c0"/><rect x="6" y="7" width="1" height="1" fill="#c0a0c0"/><rect x="8" y="7" width="1" height="1" fill="#c0a0c0"/><rect x="1" y="8" width="1" height="1" fill="#c0a0c0"/><rect x="3" y="8" width="1" height="1" fill="#c0a0c0"/><rect x="5" y="8" width="1" height="1" fill="#c0a0c0"/><rect x="7" y="8" width="1" height="1" fill="#c0a0c0"/><path d="M2 10h6l2 2h-10z" fill="#00c0c0" /><path d="M6 1l9 9M15 1l-9 9" fill="none" stroke="#ff0000" stroke-width="2" shape-rendering="auto"/></svg>
<svg style="position:absolute;left:11px;top:449px;" width="16" height="15" viewBox="0 0 16 15" shape-rendering="crispEdges"><rect x="0" y="0" width="14" height="13" fill="#000080"/><rect x="1" y="1" width="12" height="11" fill="#000"/><rect x="2" y="2" width="10" height="9" fill="#d4d0c8"/><rect x="1" y="13" width="13" height="1" fill="#000"/><circle cx="9" cy="9" r="5" fill="#0000c0" shape-rendering="auto"/><path d="M6 6h3l1 3-2 3-2-2zM10 5h2l2 3h-2z" fill="#00c000" shape-rendering="auto"/></svg>
<svg style="position:absolute;left:466px;top:333px;" width="15" height="13" viewBox="0 0 15 13" shape-rendering="crispEdges"><rect x="0" y="0" width="7" height="8" fill="#808080"/><rect x="7" y="1" width="1" height="8" fill="#fff"/><rect x="1" y="8" width="7" height="1" fill="#fff"/><rect x="5" y="3" width="4" height="4" fill="#c0c0c0"/><rect x="6" y="4" width="1" height="1" fill="#808080"/><rect x="8" y="4" width="1" height="1" fill="#808080"/><rect x="10" y="4" width="1" height="1" fill="#808080"/><rect x="12" y="4" width="1" height="1" fill="#808080"/><rect x="7" y="6" width="1" height="1" fill="#808080"/><rect x="9" y="6" width="1" height="1" fill="#808080"/><rect x="11" y="6" width="1" height="1" fill="#808080"/><rect x="13" y="6" width="1" height="1" fill="#808080"/><rect x="6" y="8" width="1" height="1" fill="#808080"/><rect x="8" y="8" width="1" height="1" fill="#808080"/><rect x="10" y="8" width="1" height="1" fill="#808080"/><rect x="12" y="8" width="1" height="1" fill="#808080"/><rect x="7" y="10" width="1" height="1" fill="#808080"/><rect x="9" y="10" width="1" height="1" fill="#808080"/><rect x="11" y="10" width="1" height="1" fill="#808080"/><rect x="13" y="10" width="1" height="1" fill="#808080"/></svg>
<svg style="position:absolute;left:488px;top:333px;" width="12" height="12" viewBox="0 0 12 12" shape-rendering="crispEdges"><circle cx="6" cy="6" r="5.5" fill="#000" shape-rendering="auto"/><circle cx="6" cy="6" r="4.5" fill="#c0c0d0" shape-rendering="auto"/><path d="M5 3l3 3-3 3z" fill="#000080" /></svg>
<svg style="position:absolute;left:510px;top:330px;" width="17" height="15" viewBox="0 0 17 15" shape-rendering="crispEdges"><path d="M5 4h6l-3-3z" fill="#000080" /><rect x="0" y="6" width="1" height="1" fill="#000"/><rect x="2" y="6" width="1" height="1" fill="#000"/><rect x="14" y="6" width="1" height="1" fill="#000"/><rect x="16" y="6" width="1" height="1" fill="#000"/><rect x="4" y="7" width="1" height="1" fill="#000"/><rect x="12" y="7" width="1" height="1" fill="#000"/><path d="M0 8h1l5 2v1h1v1h-1v1l-5 2h-1z" fill="#000" /><path d="M17 8h-1l-5 2v1h-1v1h1v1l5 2h1z" fill="#000" /></svg>
<svg style="position:absolute;left:533px;top:331px;" width="17" height="15" viewBox="0 0 17 15" shape-rendering="crispEdges"><path d="M0 0h1l5 3v1h1v1h-1v1l-5 3h-1z" fill="#000" /><path d="M17 0h-1l-5 3v1h-1v1h1v1l5 3h1z" fill="#000" /><rect x="0" y="9" width="1" height="1" fill="#000"/><rect x="2" y="9" width="1" height="1" fill="#000"/><rect x="14" y="9" width="1" height="1" fill="#000"/><rect x="16" y="9" width="1" height="1" fill="#000"/><path d="M5 11h6l-3 3z" fill="#000080" /></svg>
<div style="left:461px;top:350px;width:23px;height:23px;box-sizing:border-box;background:#c8c7d6;border:1px solid #0a246a"></div>
<svg style="position:absolute;left:465px;top:355px;" width="13" height="11" viewBox="0 0 13 11" shape-rendering="crispEdges"><rect x="0" y="0" width="13" height="11" fill="#000"/><rect x="1" y="1" width="11" height="9" fill="#c0c0c0"/><rect x="1" y="1" width="11" height="2" fill="#000080"/><rect x="3" y="1" width="2" height="1" fill="#fff"/><rect x="6" y="1" width="2" height="1" fill="#fff"/><rect x="9" y="1" width="2" height="1" fill="#fff"/><rect x="1" y="4" width="1" height="1" fill="#808080"/><rect x="3" y="4" width="1" height="1" fill="#808080"/><rect x="5" y="4" width="1" height="1" fill="#808080"/><rect x="7" y="4" width="1" height="1" fill="#808080"/><rect x="9" y="4" width="1" height="1" fill="#808080"/><rect x="11" y="4" width="1" height="1" fill="#808080"/><rect x="2" y="5" width="1" height="1" fill="#808080"/><rect x="4" y="5" width="1" height="1" fill="#808080"/><rect x="6" y="5" width="1" height="1" fill="#808080"/><rect x="8" y="5" width="1" height="1" fill="#808080"/><rect x="10" y="5" width="1" height="1" fill="#808080"/><rect x="1" y="6" width="1" height="1" fill="#808080"/><rect x="3" y="6" width="1" height="1" fill="#808080"/><rect x="5" y="6" width="1" height="1" fill="#808080"/><rect x="7" y="6" width="1" height="1" fill="#808080"/><rect x="9" y="6" width="1" height="1" fill="#808080"/><rect x="11" y="6" width="1" height="1" fill="#808080"/><rect x="2" y="7" width="1" height="1" fill="#808080"/><rect x="4" y="7" width="1" height="1" fill="#808080"/><rect x="6" y="7" width="1" height="1" fill="#808080"/><rect x="8" y="7" width="1" height="1" fill="#808080"/><rect x="10" y="7" width="1" height="1" fill="#808080"/><rect x="1" y="8" width="1" height="1" fill="#808080"/><rect x="3" y="8" width="1" height="1" fill="#808080"/><rect x="5" y="8" width="1" height="1" fill="#808080"/><rect x="7" y="8" width="1" height="1" fill="#808080"/><rect x="9" y="8" width="1" height="1" fill="#808080"/><rect x="11" y="8" width="1" height="1" fill="#808080"/><rect x="2" y="9" width="1" height="1" fill="#808080"/><rect x="4" y="9" width="1" height="1" fill="#808080"/><rect x="6" y="9" width="1" height="1" fill="#808080"/><rect x="8" y="9" width="1" height="1" fill="#808080"/><rect x="10" y="9" width="1" height="1" fill="#808080"/></svg>
<svg style="position:absolute;left:488px;top:355px;" width="13" height="11" viewBox="0 0 13 11" shape-rendering="crispEdges"><rect x="0" y="0" width="13" height="11" fill="#000"/><rect x="1" y="1" width="11" height="9" fill="#d4d0c8"/><rect x="1" y="1" width="11" height="2" fill="#000080"/><rect x="3" y="1" width="2" height="1" fill="#fff"/><rect x="6" y="1" width="2" height="1" fill="#fff"/><rect x="9" y="1" width="2" height="1" fill="#fff"/><path d="M3 4l5 5h-3zM8 6v3h-3z" fill="#000080" /></svg>
<div style="left:509px;top:350px;width:1px;height:23px;background:#808080;"></div>
<div style="left:540px;top:350px;width:1px;height:23px;background:#808080;"></div>
<div style="left:617px;top:350px;width:1px;height:23px;background:#808080;"></div>
<div style="left:648px;top:327px;width:1px;height:46px;background:#808080;"></div>
<svg style="position:absolute;left:522px;top:353px;" width="9" height="16" viewBox="0 0 9 16" shape-rendering="crispEdges"><path d="M1 0h6l1 1v9l-4 5-4-5v-9z" fill="#000" /><path d="M2 1h5v9l-3 4-3-4v-9z" fill="#b0a000" /><path d="M3 1h4v8l-3 4-1-1.5z" fill="#d4d0c8" /><path d="M2.5 8l2 2 2-2" fill="none" stroke="#000" stroke-width="1" /></svg>
<svg style="position:absolute;left:549px;top:354px;" width="16" height="15" viewBox="0 0 16 15" shape-rendering="crispEdges"><rect x="0" y="0" width="1" height="15" fill="#000"/><rect x="0" y="0" width="10" height="1" fill="#000"/><rect x="1" y="1" width="9" height="3" fill="#fff"/><rect x="1" y="4" width="9" height="1" fill="#000"/><rect x="2" y="6" width="14" height="1" fill="#808080"/><rect x="2" y="8" width="14" height="1" fill="#808080"/><rect x="2" y="10" width="14" height="1" fill="#808080"/><rect x="2" y="12" width="14" height="1" fill="#808080"/><rect x="2" y="14" width="14" height="1" fill="#808080"/><rect x="8" y="0" width="8" height="8" fill="#000080"/><rect x="9" y="1" width="6" height="6" fill="#fff"/><path d="M12 1l2 2h-4z" fill="#000080" /><path d="M12 7l2-2h-4z" fill="#000080" /><rect x="11" y="3" width="2" height="2" fill="#000080"/></svg>
<svg style="position:absolute;left:572px;top:354px;" width="16" height="15" viewBox="0 0 16 15" shape-rendering="crispEdges"><rect x="0" y="0" width="1" height="15" fill="#000"/><rect x="2" y="1" width="9" height="1" fill="#808080"/><rect x="2" y="3" width="9" height="1" fill="#808080"/><rect x="2" y="5" width="9" height="1" fill="#808080"/><rect x="2" y="7" width="9" height="1" fill="#808080"/><rect x="2" y="9" width="9" height="1" fill="#808080"/><rect x="0" y="11" width="16" height="1" fill="#000"/><rect x="1" y="12" width="14" height="2" fill="#fff"/><rect x="0" y="14" width="16" height="1" fill="#000"/><rect x="15" y="11" width="1" height="4" fill="#000"/><rect x="8" y="0" width="8" height="8" fill="#000080"/><rect x="9" y="1" width="6" height="6" fill="#fff"/><path d="M12 1l2 2h-4z" fill="#000080" /><path d="M12 7l2-2h-4z" fill="#000080" /><rect x="11" y="3" width="2" height="2" fill="#000080"/></svg>
<svg style="position:absolute;left:595px;top:354px;" width="16" height="15" viewBox="0 0 16 15" shape-rendering="crispEdges"><rect x="0" y="0" width="16" height="15" fill="#000"/><rect x="1" y="1" width="14" height="13" fill="#d4d0c8"/><rect x="2" y="2" width="9" height="1" fill="#808080"/><rect x="2" y="4" width="9" height="1" fill="#808080"/><rect x="2" y="6" width="9" height="1" fill="#808080"/><rect x="2" y="8" width="9" height="1" fill="#808080"/><rect x="2" y="10" width="9" height="1" fill="#808080"/><rect x="1" y="11" width="14" height="3" fill="#fff"/><rect x="8" y="0" width="8" height="8" fill="#000080"/><rect x="9" y="1" width="6" height="6" fill="#fff"/><path d="M12 1l2 2h-4z" fill="#000080" /><path d="M12 7l2-2h-4z" fill="#000080" /><rect x="11" y="3" width="2" height="2" fill="#000080"/><rect x="6" y="3" width="1" height="9" fill="#000080"/><circle cx="4" cy="12" r="2.2" fill="#000080" shape-rendering="auto"/><path d="M7 3l2 2v2l-2-2z" fill="#000080" /></svg>
<svg style="position:absolute;left:628px;top:353px;" width="16" height="15" viewBox="0 0 16 15" shape-rendering="crispEdges"><rect x="0" y="2" width="3" height="2" fill="#000080"/><rect x="4" y="2" width="11" height="2" fill="#000080"/><rect x="2" y="5" width="1" height="2" fill="#000080"/><rect x="4" y="5" width="11" height="2" fill="#000080"/><rect x="2" y="8" width="1" height="2" fill="#000080"/><rect x="4" y="8" width="11" height="2" fill="#000080"/><rect x="2" y="11" width="1" height="2" fill="#000080"/><rect x="4" y="11" width="11" height="2" fill="#000080"/><rect x="4" y="13" width="2" height="1" fill="#808080"/><rect x="8" y="13" width="2" height="1" fill="#808080"/><path d="M9 0h7v1h-1v1h-1v1h-1v1h-1v-1h-1v-1h-1v-1h-1z" fill="#000" /><rect x="11" y="1" width="3" height="1" fill="#00c000"/><rect x="12" y="2" width="1" height="1" fill="#00c000"/></svg>
<svg style="position:absolute;left:628px;top:330px;" width="16" height="15" viewBox="0 0 16 15" shape-rendering="crispEdges"><g shape-rendering="auto"><circle cx="5.5" cy="10.5" r="3.8" fill="#fff" stroke="#000" stroke-width="1.5"/><circle cx="10.5" cy="5.5" r="3.8" fill="#fff" stroke="#000" stroke-width="1.5"/><path d="M4 12L12 4" stroke="#000" stroke-width="2"/></g><path d="M9 0h7v1h-1v1h-1v1h-1v1h-1v-1h-1v-1h-1v-1h-1z" fill="#000" /><rect x="11" y="1" width="3" height="1" fill="#00c000"/><rect x="12" y="2" width="1" height="1" fill="#00c000"/></svg>
<div style="left:561px;top:328px;width:53px;height:20px;background:#f7faf7;box-shadow:inset 1px 1px #808080,inset -1px -1px #ffffff,inset 2px 2px #404040,inset -2px -2px #d4d0c8;"></div>
<div style="left:564px;top:333px;font-family:'Liberation Serif',serif;font-size:12px;color:#000;font-weight:normal;white-space:nowrap;line-height:1;-webkit-text-stroke:0;-webkit-text-stroke:0.3px #000">1</div>
<div style="left:597px;top:329px;width:16px;height:9px;background:#d4d0c8;box-shadow:inset -1px -1px #404040,inset 1px 1px #d4d0c8,inset -2px -2px #808080,inset 2px 2px #ffffff;"></div>
<div style="left:597px;top:338px;width:16px;height:9px;background:#d4d0c8;box-shadow:inset -1px -1px #404040,inset 1px 1px #d4d0c8,inset -2px -2px #808080,inset 2px 2px #ffffff;"></div>
<svg style="position:absolute;left:602px;top:332px;" width="5" height="3" viewBox="0 0 5 3" shape-rendering="crispEdges"><path d="M2 0h1v1h1v1h1v1h-5v-1h1v-1h1z" fill="#000"/></svg>
<svg style="position:absolute;left:602px;top:341px;" width="5" height="3" viewBox="0 0 5 3" shape-rendering="crispEdges"><path d="M0 0h5v1h-1v1h-1v1h-1v-1h-1v-1h-1z" fill="#000"/></svg>
<svg style="position:absolute;left:657px;top:331px;shape-rendering:auto" width="18" height="16" viewBox="0 0 18 16" shape-rendering="crispEdges"><rect x="3" y="2" width="7" height="1" fill="#fff"/><rect x="2" y="1" width="7" height="1" fill="#808080"/><rect x="3" y="4" width="9" height="1" fill="#fff"/><rect x="2" y="3" width="9" height="1" fill="#808080"/><rect x="2" y="6" width="7" height="1" fill="#fff"/><rect x="1" y="5" width="7" height="1" fill="#808080"/><rect x="2" y="8" width="8" height="1" fill="#fff"/><rect x="1" y="7" width="8" height="1" fill="#808080"/><rect x="2" y="10" width="7" height="1" fill="#fff"/><rect x="1" y="9" width="7" height="1" fill="#808080"/><rect x="2" y="12" width="9" height="1" fill="#fff"/><rect x="1" y="11" width="9" height="1" fill="#808080"/><rect x="3" y="14" width="8" height="1" fill="#fff"/><rect x="2" y="13" width="8" height="1" fill="#808080"/><path d="M11 10.5L13.5 8 16 10.5M11 13.5L13.5 11 16 13.5" fill="none" stroke="#fff" stroke-width="1" transform="translate(1 1)"/><path d="M11 10.5L13.5 8 16 10.5M11 13.5L13.5 11 16 13.5" fill="none" stroke="#808080" stroke-width="1"/></svg>
<svg style="position:absolute;left:681px;top:331px;shape-rendering:auto" width="18" height="16" viewBox="0 0 18 16" shape-rendering="crispEdges"><rect x="3" y="2" width="7" height="1" fill="#fff"/><rect x="2" y="1" width="7" height="1" fill="#808080"/><rect x="3" y="4" width="9" height="1" fill="#fff"/><rect x="2" y="3" width="9" height="1" fill="#808080"/><rect x="2" y="6" width="7" height="1" fill="#fff"/><rect x="1" y="5" width="7" height="1" fill="#808080"/><rect x="2" y="8" width="8" height="1" fill="#fff"/><rect x="1" y="7" width="8" height="1" fill="#808080"/><rect x="2" y="10" width="7" height="1" fill="#fff"/><rect x="1" y="9" width="7" height="1" fill="#808080"/><rect x="2" y="12" width="9" height="1" fill="#fff"/><rect x="1" y="11" width="9" height="1" fill="#808080"/><rect x="3" y="14" width="10" height="1" fill="#fff"/><rect x="2" y="13" width="10" height="1" fill="#808080"/><path d="M11 0.5L13.5 3 16 0.5M11 3.5L13.5 6 16 3.5" fill="none" stroke="#fff" stroke-width="1" transform="translate(1 1)"/><path d="M11 0.5L13.5 3 16 0.5M11 3.5L13.5 6 16 3.5" fill="none" stroke="#808080" stroke-width="1"/></svg>
<svg style="position:absolute;left:656px;top:355px;shape-rendering:auto" width="18" height="16" viewBox="0 0 18 16" shape-rendering="crispEdges"><rect x="8" y="1" width="5" height="1" fill="#fff"/><rect x="7" y="0" width="5" height="1" fill="#808080"/><rect x="8" y="3" width="7" height="1" fill="#fff"/><rect x="7" y="2" width="7" height="1" fill="#808080"/><rect x="8" y="5" width="5" height="1" fill="#fff"/><rect x="7" y="4" width="5" height="1" fill="#808080"/><rect x="8" y="7" width="5" height="1" fill="#fff"/><rect x="7" y="6" width="5" height="1" fill="#808080"/><rect x="6" y="9" width="9" height="1" fill="#fff"/><rect x="5" y="8" width="9" height="1" fill="#808080"/><rect x="4" y="11" width="8" height="1" fill="#fff"/><rect x="3" y="10" width="8" height="1" fill="#808080"/><rect x="5" y="13" width="9" height="1" fill="#fff"/><rect x="4" y="12" width="9" height="1" fill="#808080"/><path d="M3.5 1L1 3.5 3.5 6M6 1L3.5 3.5 6 6" fill="none" stroke="#fff" stroke-width="1" transform="translate(1 1)"/><path d="M3.5 1L1 3.5 3.5 6M6 1L3.5 3.5 6 6" fill="none" stroke="#808080" stroke-width="1"/></svg>
<svg style="position:absolute;left:681px;top:355px;shape-rendering:auto" width="18" height="16" viewBox="0 0 18 16" shape-rendering="crispEdges"><rect x="2" y="1" width="7" height="1" fill="#fff"/><rect x="1" y="0" width="7" height="1" fill="#808080"/><rect x="2" y="3" width="9" height="1" fill="#fff"/><rect x="1" y="2" width="9" height="1" fill="#808080"/><rect x="1" y="5" width="7" height="1" fill="#fff"/><rect x="0" y="4" width="7" height="1" fill="#808080"/><rect x="1" y="7" width="8" height="1" fill="#fff"/><rect x="0" y="6" width="8" height="1" fill="#808080"/><rect x="1" y="9" width="7" height="1" fill="#fff"/><rect x="0" y="8" width="7" height="1" fill="#808080"/><rect x="1" y="11" width="9" height="1" fill="#fff"/><rect x="0" y="10" width="9" height="1" fill="#808080"/><rect x="2" y="13" width="10" height="1" fill="#fff"/><rect x="1" y="12" width="10" height="1" fill="#808080"/><path d="M10 1L12.5 3.5 10 6M12.5 1L15 3.5 12.5 6" fill="none" stroke="#fff" stroke-width="1" transform="translate(1 1)"/><path d="M10 1L12.5 3.5 10 6M12.5 1L15 3.5 12.5 6" fill="none" stroke="#808080" stroke-width="1"/></svg>
<svg style="position:absolute;left:695px;top:310px;" width="7" height="7" viewBox="0 0 7 7" shape-rendering="crispEdges"><path d="M0 0h2v1h1v1h1v-1h1v-1h2v1h-1v1h-1v1h-1v1h1v1h1v1h1v1h-2v-1h-1v-1h-1v1h-1v1h-2v-1h1v-1h1v-1h1v-1h-1v-1h-1v-1h-1z" fill="#000"/></svg>
<svg style="position:absolute;left:470px;top:389px;" width="9" height="9" viewBox="0 0 9 9" shape-rendering="crispEdges"><rect x="0" y="0" width="9" height="9" fill="#000"/><rect x="1" y="1" width="7" height="7" fill="#f7faf7"/><rect x="2" y="4" width="5" height="1" fill="#000"/><rect x="4" y="2" width="1" height="5" fill="#000"/></svg>
<svg style="position:absolute;left:470px;top:405px;" width="9" height="9" viewBox="0 0 9 9" shape-rendering="crispEdges"><rect x="0" y="0" width="9" height="9" fill="#000"/><rect x="1" y="1" width="7" height="7" fill="#f7faf7"/><rect x="2" y="4" width="5" height="1" fill="#000"/><rect x="4" y="2" width="1" height="5" fill="#000"/></svg>
<svg style="position:absolute;left:470px;top:517px;" width="9" height="9" viewBox="0 0 9 9" shape-rendering="crispEdges"><rect x="0" y="0" width="9" height="9" fill="#000"/><rect x="1" y="1" width="7" height="7" fill="#f7faf7"/><rect x="2" y="4" width="5" height="1" fill="#000"/><rect x="4" y="2" width="1" height="5" fill="#000"/></svg>
<svg style="position:absolute;left:470px;top:485px;" width="9" height="9" viewBox="0 0 9 9" shape-rendering="crispEdges"><rect x="0" y="0" width="9" height="9" fill="#000"/><rect x="1" y="1" width="7" height="7" fill="#f7faf7"/><rect x="2" y="4" width="5" height="1" fill="#000"/></svg>
<svg style="position:absolute;left:487px;top:388px;" width="14" height="13" viewBox="0 0 14 13" shape-rendering="crispEdges"><rect x="0" y="0" width="2" height="2" fill="#800000"/><rect x="3" y="0" width="11" height="2" fill="#800000"/><rect x="3" y="3" width="11" height="1" fill="#808080"/><rect x="3" y="5" width="11" height="1" fill="#808080"/><rect x="3" y="7" width="11" height="1" fill="#808080"/><rect x="3" y="9" width="11" height="1" fill="#808080"/><rect x="3" y="11" width="11" height="1" fill="#808080"/></svg>
<svg style="position:absolute;left:487px;top:404px;" width="15" height="14" viewBox="0 0 15 14" shape-rendering="crispEdges"><rect x="0" y="0" width="15" height="14" fill="#000"/><rect x="1" y="1" width="2" height="2" fill="#fff"/><rect x="1" y="5" width="2" height="2" fill="#fff"/><rect x="1" y="8" width="2" height="2" fill="#fff"/><rect x="1" y="11" width="2" height="2" fill="#fff"/><rect x="4" y="1" width="10" height="2" fill="#fff"/><rect x="4" y="5" width="5" height="2" fill="#fff"/><rect x="10" y="5" width="4" height="2" fill="#fff"/><rect x="4" y="8" width="5" height="2" fill="#fff"/><rect x="10" y="8" width="4" height="2" fill="#fff"/><rect x="4" y="11" width="5" height="2" fill="#fff"/><rect x="10" y="11" width="4" height="2" fill="#fff"/></svg>
<svg style="position:absolute;left:487px;top:421px;" width="14" height="11" viewBox="0 0 14 11" shape-rendering="crispEdges"><rect x="0" y="0" width="2" height="1" fill="#000080"/><rect x="0" y="10" width="2" height="1" fill="#000080"/><rect x="3" y="0" width="2" height="1" fill="#000080"/><rect x="3" y="10" width="2" height="1" fill="#000080"/><rect x="6" y="0" width="2" height="1" fill="#000080"/><rect x="6" y="10" width="2" height="1" fill="#000080"/><rect x="9" y="0" width="2" height="1" fill="#000080"/><rect x="9" y="10" width="2" height="1" fill="#000080"/><rect x="12" y="0" width="2" height="1" fill="#000080"/><rect x="12" y="10" width="2" height="1" fill="#000080"/><rect x="0" y="0" width="1" height="2" fill="#000080"/><rect x="13" y="0" width="1" height="2" fill="#000080"/><rect x="0" y="3" width="1" height="2" fill="#000080"/><rect x="13" y="3" width="1" height="2" fill="#000080"/><rect x="0" y="6" width="1" height="2" fill="#000080"/><rect x="13" y="6" width="1" height="2" fill="#000080"/><rect x="0" y="9" width="1" height="2" fill="#000080"/><rect x="13" y="9" width="1" height="2" fill="#000080"/><rect x="0" y="0" width="1" height="1" fill="#000080"/><rect x="13" y="0" width="1" height="1" fill="#000080"/></svg>
<svg style="position:absolute;left:487px;top:436px;" width="13" height="13" viewBox="0 0 13 13" shape-rendering="crispEdges"><rect x="1" y="3" width="7" height="6" fill="#000"/><rect x="2" y="4" width="5" height="4" fill="#800080"/><circle cx="9.5" cy="3.5" r="3.5" fill="#000" shape-rendering="auto"/><circle cx="9.5" cy="3.5" r="2.5" fill="#ffff00" shape-rendering="auto"/><path d="M1 12l5-5 5 5z" fill="#000" /><path d="M3 11l3-3 3 3z" fill="#00c0c0" /></svg>
<svg style="position:absolute;left:485px;top:449px;" width="17" height="17" viewBox="0 0 17 17" shape-rendering="crispEdges"><g shape-rendering="auto" transform="translate(0 2)"><circle cx="6" cy="8" r="6" fill="#000"/><path d="M6 8V3a5 5 0 0 0 -4 8z" fill="#f0f060"/><path d="M6 8V3a5 5 0 0 1 5 4z" fill="#60c8c8"/><path d="M6 8L2 11a5 5 0 0 0 9-4z" fill="#805880"/><path d="M6 2.5V8L1.8 11.2M6 8L11.3 6.8" stroke="#000" stroke-width="1" fill="none"/></g><rect x="11" y="3" width="2" height="2" fill="#000"/><rect x="12" y="5" width="1" height="1" fill="#000"/><rect x="13" y="6" width="2" height="2" fill="#000"/></svg>
<svg style="position:absolute;left:486px;top:468px;" width="16" height="12" viewBox="0 0 16 12" shape-rendering="crispEdges"><rect x="0" y="5" width="6" height="1" fill="#000"/><rect x="1" y="6" width="5" height="1" fill="#808000"/><path d="M6 1h1v2h1l1-1h3l1 1h1v-2h1v10h-1v-2h-1l-1 1h-3l-1-1h-1v2h-1z" fill="#000" /><rect x="9" y="4" width="3" height="4" fill="#c0c0c0"/><rect x="8" y="3" width="1" height="1" fill="#ffff00"/><rect x="12" y="3" width="1" height="1" fill="#ffff00"/></svg>
<svg style="position:absolute;left:487px;top:484px;" width="14" height="11" viewBox="0 0 14 11" shape-rendering="crispEdges"><rect x="0" y="0" width="11" height="1" fill="#808080"/><rect x="0" y="2" width="11" height="1" fill="#808080"/><rect x="0" y="4" width="14" height="1" fill="#000080"/><rect x="0" y="6" width="14" height="1" fill="#000080"/><rect x="0" y="8" width="14" height="1" fill="#000080"/><rect x="0" y="10" width="11" height="1" fill="#808080"/></svg>
<svg style="position:absolute;left:485px;top:513px;" width="16" height="16" viewBox="0 0 16 16" shape-rendering="crispEdges"><g shape-rendering="auto"><circle cx="5.5" cy="10.5" r="3.6" fill="#fff" stroke="#000" stroke-width="1.2"/><circle cx="10.5" cy="5.5" r="3.6" fill="#fff" stroke="#000" stroke-width="1.2"/><path d="M4 12L12 4" stroke="#000" stroke-width="2"/></g></svg>
<svg style="position:absolute;left:487px;top:532px;" width="14" height="13" viewBox="0 0 14 13" shape-rendering="crispEdges"><rect x="0" y="0" width="7" height="1" fill="#808080"/><rect x="0" y="2" width="7" height="1" fill="#808080"/><rect x="0" y="6" width="7" height="1" fill="#808080"/><rect x="0" y="8" width="7" height="1" fill="#808080"/><rect x="0" y="10" width="7" height="1" fill="#808080"/><rect x="1" y="4" width="1" height="1" fill="#c000c0"/><rect x="3" y="4" width="1" height="1" fill="#c000c0"/><rect x="5" y="4" width="1" height="1" fill="#c000c0"/><rect x="7" y="4" width="5" height="1" fill="#000080"/><rect x="11" y="4" width="1" height="4" fill="#000080"/><path d="M9 7h5l-2.5 2z" fill="#000080" /><rect x="9" y="10" width="5" height="1" fill="#000080"/><rect x="9" y="12" width="5" height="1" fill="#000080"/></svg>
<svg style="position:absolute;left:487px;top:548px;" width="14" height="13" viewBox="0 0 14 13" shape-rendering="crispEdges"><rect x="0" y="0" width="2" height="1" fill="#808080"/><rect x="3" y="0" width="11" height="1" fill="#808080"/><rect x="0" y="2" width="2" height="1" fill="#808080"/><rect x="3" y="2" width="11" height="1" fill="#808080"/><rect x="0" y="4" width="2" height="2" fill="#000080"/><rect x="3" y="4" width="11" height="2" fill="#000080"/><rect x="0" y="7" width="2" height="1" fill="#808080"/><rect x="3" y="7" width="11" height="1" fill="#808080"/><rect x="0" y="9" width="2" height="1" fill="#808080"/><rect x="3" y="9" width="11" height="1" fill="#808080"/><rect x="0" y="11" width="2" height="1" fill="#808080"/><rect x="3" y="11" width="11" height="1" fill="#808080"/></svg>
<div style="left:682px;top:386px;width:16px;height:174px;background:#ebe9e5;"></div>
<div style="left:682px;top:386px;width:16px;height:16px;background:#d4d0c8;box-shadow:inset -1px -1px #404040,inset 1px 1px #d4d0c8,inset -2px -2px #808080,inset 2px 2px #ffffff;"></div>
<div style="left:682px;top:402px;width:16px;height:107px;background:#d4d0c8;box-shadow:inset -1px -1px #404040,inset 1px 1px #d4d0c8,inset -2px -2px #808080,inset 2px 2px #ffffff;"></div>
<div style="left:682px;top:544px;width:16px;height:16px;background:#d4d0c8;box-shadow:inset -1px -1px #404040,inset 1px 1px #d4d0c8,inset -2px -2px #808080,inset 2px 2px #ffffff;"></div>
<svg style="position:absolute;left:8px;top:5px;" width="13" height="16" viewBox="0 0 13 16" shape-rendering="crispEdges"><rect x="0" y="0" width="13" height="16" fill="#8a8a70"/><rect x="1" y="1" width="11" height="14" fill="#fffff0"/><rect x="2" y="4" width="6" height="1" fill="#0000ff"/><rect x="2" y="6" width="10" height="1" fill="#0000ff"/><rect x="2" y="8" width="8" height="1" fill="#0000ff"/><rect x="2" y="10" width="10" height="1" fill="#0000ff"/><rect x="2" y="12" width="6" height="1" fill="#0000ff"/><rect x="8" y="2" width="4" height="4" fill="#303030"/><rect x="9" y="3" width="2" height="2" fill="#fff"/></svg>
<svg style="position:absolute;left:736px;top:108px;" width="8" height="5" viewBox="0 0 8 5" shape-rendering="crispEdges"><path d="M3 0h1v1h1v1h1v1h1v1h-7v-1h1v-1h1v-1h1z" fill="#fff" transform="translate(1 1)"/><path d="M3 0h1v1h1v1h1v1h1v1h-7v-1h1v-1h1v-1h1z" fill="#808080"/></svg>
<svg style="position:absolute;left:736px;top:573px;" width="8" height="5" viewBox="0 0 8 5" shape-rendering="crispEdges"><path d="M0 0h7v1h-1v1h-1v1h-1v1h-1v-1h-1v-1h-1v-1h-1z" fill="#000"/></svg>
<svg style="position:absolute;left:736px;top:586px;" width="7" height="9" viewBox="0 0 7 9" shape-rendering="crispEdges"><path d="M3 0h1v1h1v1h1v1h1v1h-7v-1h1v-1h1v-1h1zM3 5h1v1h1v1h1v1h1v1h-7v-1h1v-1h1v-1h1z" fill="#000"/></svg>
<svg style="position:absolute;left:736px;top:603px;shape-rendering:auto" width="7" height="7" viewBox="0 0 7 7" shape-rendering="crispEdges"><circle cx="3.5" cy="3.5" r="3.2" fill="#505050"/><circle cx="3" cy="3" r="1.6" fill="#e0e0e0"/></svg>
<svg style="position:absolute;left:736px;top:618px;" width="7" height="9" viewBox="0 0 7 9" shape-rendering="crispEdges"><path d="M0 0h7v1h-1v1h-1v1h-1v1h-1v-1h-1v-1h-1v-1h-1zM0 5h7v1h-1v1h-1v1h-1v1h-1v-1h-1v-1h-1v-1h-1z" fill="#000"/></svg>
<svg style="position:absolute;left:40px;top:635px;" width="5" height="8" viewBox="0 0 5 8" shape-rendering="crispEdges"><path d="M3 0h1v7h-1v-1h-1v-1h-1v-1h-1v-1h1v-1h1v-1h1z" fill="#fff" transform="translate(1 1)"/><path d="M3 0h1v7h-1v-1h-1v-1h-1v-1h-1v-1h1v-1h1v-1h1z" fill="#808080"/></svg>
<svg style="position:absolute;left:722px;top:635px;" width="5" height="8" viewBox="0 0 5 8" shape-rendering="crispEdges"><path d="M0 0h1v1h1v1h1v1h1v1h-1v1h-1v1h-1v1h-1z" fill="#000"/></svg>
<svg style="position:absolute;left:686px;top:391px;" width="8" height="5" viewBox="0 0 8 5" shape-rendering="crispEdges"><path d="M3 0h1v1h1v1h1v1h1v1h-7v-1h1v-1h1v-1h1z" fill="#fff" transform="translate(1 1)"/><path d="M3 0h1v1h1v1h1v1h1v1h-7v-1h1v-1h1v-1h1z" fill="#808080"/></svg>
<svg style="position:absolute;left:686px;top:550px;" width="8" height="5" viewBox="0 0 8 5" shape-rendering="crispEdges"><path d="M0 0h7v1h-1v1h-1v1h-1v1h-1v-1h-1v-1h-1v-1h-1z" fill="#000"/></svg>

</body></html>
